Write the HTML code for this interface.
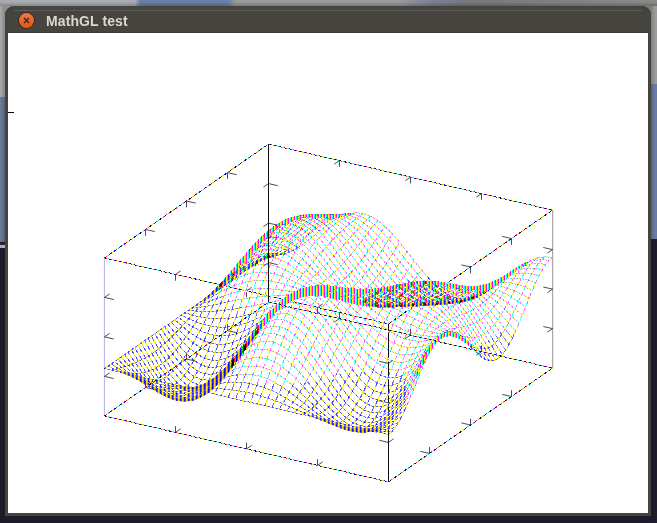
<!DOCTYPE html>
<html><head><meta charset="utf-8"><style>
html,body{margin:0;padding:0;width:657px;height:523px;overflow:hidden;background:#1b1b29;position:relative}
div{position:absolute}
.mesh path{mix-blend-mode:multiply}
.z0p0{stroke:url(#pm0);stroke-opacity:0.8}.z0p1{stroke:url(#pm0);stroke-opacity:0.8}.z0p2{stroke:url(#pm0);stroke-opacity:0.8}.z1p0{stroke:url(#pm0);stroke-opacity:0.72}.z1p1{stroke:url(#pm0);stroke-opacity:0.72}.z1p2{stroke:url(#pm0);stroke-opacity:0.72}.z2p0{stroke:url(#pp0);stroke-opacity:0.7}.z2p1{stroke:url(#pp1);stroke-opacity:0.7}.z2p2{stroke:url(#pp2);stroke-opacity:0.7}.z0p0d{stroke:url(#pm0);stroke-opacity:0.5;stroke-width:2}.z0p1d{stroke:url(#pm0);stroke-opacity:0.5;stroke-width:2}.z0p2d{stroke:url(#pm0);stroke-opacity:0.5;stroke-width:2}.z1p0d{stroke:url(#pm0);stroke-opacity:0.45;stroke-width:2}.z1p1d{stroke:url(#pm0);stroke-opacity:0.45;stroke-width:2}.z1p2d{stroke:url(#pm0);stroke-opacity:0.45;stroke-width:2}.z2p0d{stroke:url(#pp0);stroke-opacity:0.9;stroke-width:2}.z2p1d{stroke:url(#pp0);stroke-opacity:0.9;stroke-width:2}.z2p2d{stroke:url(#pp0);stroke-opacity:0.9;stroke-width:2}
#title{left:46px;top:14px;font:bold 14px "Liberation Sans",sans-serif;color:#dcd8cf;white-space:nowrap;line-height:1;letter-spacing:0.1px}
</style></head><body>
<div style="left:0;top:0;width:657px;height:6px;background:linear-gradient(90deg,#a9acb0 0,#a9acb0 135px,#6a80a8 140px,#6a80a8 228px,#9a9a9a 236px,#9a9a9a 400px,#7a8298 430px,#78787a 470px,#8a8a8a 657px)"></div>
<div style="left:0;top:6px;width:5px;height:91px;background:#a4a6a8"></div>
<div style="left:0;top:97px;width:5px;height:145px;background:#6b7a98"></div>
<div style="left:0;top:243px;width:5px;height:2px;background:#2a2838"></div>
<div style="left:0;top:245px;width:5px;height:3px;background:#b0b0b8"></div>
<div style="left:0;top:248px;width:5px;height:275px;background:#1c1b2a"></div>
<div style="left:651px;top:6px;width:6px;height:78px;background:#9c9c9c"></div>
<div style="left:651px;top:84px;width:6px;height:155px;background:#6a7ca4"></div>
<div style="left:651px;top:239px;width:6px;height:284px;background:#1e1c2a"></div>
<div style="left:0;top:2px;width:657px;height:4px;background:linear-gradient(180deg,rgba(0,0,0,0),rgba(0,0,0,0.22))"></div>
<div style="left:1px;top:6px;width:4px;height:236px;background:linear-gradient(90deg,rgba(0,0,0,0),rgba(0,0,0,0.2))"></div>
<div style="left:651px;top:6px;width:4px;height:233px;background:linear-gradient(270deg,rgba(0,0,0,0),rgba(0,0,0,0.2))"></div>
<div style="left:5px;top:6px;width:12px;height:12px;background:#8f9295"></div>
<div style="left:639px;top:6px;width:12px;height:12px;background:#7c7c7c"></div>
<div style="left:5px;top:6px;width:646px;height:510px;background:#45443f;border-radius:9px 9px 0 0"></div>
<div style="left:5px;top:6px;width:646px;height:26px;background:#46443e;border-radius:9px 9px 0 0"></div>
<div style="left:14px;top:10px;width:628px;height:1px;background:#5d5b55"></div>
<div style="left:8px;top:32px;width:640px;height:1px;background:#3a3935"></div>
<div style="left:19px;top:13px;width:15px;height:15px;border-radius:50%;background:linear-gradient(180deg,#f07a4a 0,#e8621e 60%,#e05a12 100%);box-shadow:0 0 0 1px #3a2a22"></div>
<svg style="position:absolute;left:19px;top:13px" width="15" height="15" viewBox="0 0 15 15"><path d="M5 5L10 10M10 5L5 10" stroke="#3b2418" stroke-width="1.2"/></svg>
<div id="title">MathGL test</div>
<div style="left:8px;top:33px;width:640px;height:480px;background:#fff"></div>
<svg style="position:absolute;left:0;top:0" width="657" height="523" viewBox="0 0 657 523">
<defs>
<pattern id="pm0" patternUnits="userSpaceOnUse" x="0" y="0" width="4" height="4"><rect x="0" y="0" width="1" height="4" fill="#1818ff"/><rect x="1" y="0" width="1" height="4" fill="#ff1010"/><rect x="2" y="0" width="1" height="4" fill="#ffee00"/><rect x="3" y="0" width="1" height="4" fill="#00eeff"/></pattern><pattern id="pp0" patternUnits="userSpaceOnUse" x="0" y="0" width="3" height="4"><rect x="0" y="0" width="1" height="4" fill="#ff30ff"/><rect x="1" y="0" width="1" height="4" fill="#ffff20"/><rect x="2" y="0" width="1" height="4" fill="#20ffff"/></pattern><pattern id="pp1" patternUnits="userSpaceOnUse" x="0" y="0" width="3" height="4"><rect x="0" y="0" width="1" height="4" fill="#ffff20"/><rect x="1" y="0" width="1" height="4" fill="#20ffff"/><rect x="2" y="0" width="1" height="4" fill="#ff30ff"/></pattern><pattern id="pp2" patternUnits="userSpaceOnUse" x="0" y="0" width="3" height="4"><rect x="0" y="0" width="1" height="4" fill="#20ffff"/><rect x="1" y="0" width="1" height="4" fill="#ff30ff"/><rect x="2" y="0" width="1" height="4" fill="#ffff20"/></pattern>
<pattern id="pb" patternUnits="userSpaceOnUse" x="0" y="0" width="5" height="5">
<rect x="0" y="0" width="1" height="5" fill="#000"/><rect x="1" y="0" width="1" height="5" fill="#ff2020"/><rect x="2" y="0" width="1" height="5" fill="#e8f020"/><rect x="3" y="0" width="1" height="5" fill="#20e8f0"/><rect x="4" y="0" width="1" height="5" fill="#2020ff"/>
</pattern>
</defs>
<g fill="none" stroke-width="1" shape-rendering="crispEdges" class="mesh"><path class="z0p0" d="M104.5 368.5 111.8 370.2 119.1 371.9 122.7 372.7M135.4 375.7 140.9 377 148.2 378.7 155.5 380.3M157.3 380.8 162.8 382 170 383.7 177.3 385.4 179.1 385.8M182.8 386.7 184.6 387.1M208.3 392.6 213.7 393.9 221 395.6 228.3 397.3 235.6 399 242.9 400.7 250.1 402.3 257.4 404 264.7 405.7 272 407.4 279.3 409.1 286.6 410.8 293.8 412.5 301.1 414.2 308.4 415.9 315.7 417.6M328.4 420.5 330.2 421M332.1 421.4 333.9 421.8M335.7 422.2 337.5 422.7M339.3 423.1 344.8 424.3 352.1 426 355.7 426.9M359.4 427.7 361.2 428.2M377.6 432 381.2 432.8 388.5 434.5"/><path class="z0p0d" d="M122.7 372.7 126.3 373.6 133.6 375.3 135.4 375.7M155.5 380.3 157.3 380.8M179.1 385.8 182.8 386.7M184.6 387.1 191.9 388.8 199.2 390.5 206.4 392.2 208.3 392.6M315.7 417.6 323 419.3 328.4 420.5M330.2 421 332.1 421.4M333.9 421.8 335.7 422.2M337.5 422.7 339.3 423.1M355.7 426.9 359.4 427.7M361.2 428.2 366.7 429.4 373.9 431.1 377.6 432"/><path class="z0p1" d="M107.8 366.2 115.1 369.3 120.6 371.6M147.9 381.3 149.7 381.8M151.5 382.3 158.8 384 166.1 385.4 173.4 386.4 180.7 387.1M204.3 388.2 206.2 388.2M289.9 406.8 297.2 409.9 304.5 413 311.7 416.1 315.4 417.5M319 419 320.8 419.6M339.1 425.5 340.9 426M377.3 431.1 384.6 431.4 391.8 431.6"/><path class="z0p1d" d="M120.6 371.6 122.4 372.4 129.7 375.3 137 377.9 144.3 380.3 147.9 381.3M149.7 381.8 151.5 382.3M180.7 387.1 187.9 387.6 195.2 387.9 202.5 388.1 204.3 388.2M206.2 388.2 209.8 388.3M315.4 417.5 319 419M320.8 419.6 326.3 421.6 333.6 423.9 339.1 425.5M340.9 426 348.2 427.6 355.4 428.9 362.7 429.9 370 430.6 377.3 431.1"/><path class="z1p1d" d="M209.8 388.3 213.4 388.5"/><path class="z1p1" d="M213.4 388.5 217.1 388.7 224.4 389.1 231.6 389.8 238.9 390.8 246.2 392.2 253.5 393.9 260.8 395.9 268.1 398.2 275.3 400.9 282.6 403.8 289.9 406.8"/><path class="z0p2" d="M111.2 363.9 118.5 368.4 122.1 370.6M149.4 384.1 154.9 385.9 162.2 387.6 169.5 388.5 176.7 388.9 182.2 388.7M298.7 405.7 300.5 406.8 307.8 411.3 315.1 415.6M336.9 426.1 338.8 426.7M378.8 430.2 380.6 430 387.9 428.8 393.4 427.9"/><path class="z0p2d" d="M122.1 370.6 125.8 372.8 133 376.9 140.3 380.5 147.6 383.5 149.4 384.1M182.2 388.7 184 388.6 191.3 387.9 198.6 386.8 205.9 385.6 209.5 385M315.1 415.6 322.4 419.6 329.7 423.1 336.9 426.1M338.8 426.7 344.2 428.4 351.5 430 358.8 430.9 366.1 431.1 373.3 430.8 378.8 430.2"/><path class="z1p2d" d="M209.5 385 213.1 384.4 218.6 383.6"/><path class="z1p2" d="M218.6 383.6 220.4 383.3 227.7 382.6 235 382.3 242.3 382.6 249.6 383.5 256.8 385.2 264.1 387.5 271.4 390.4 278.7 394 286 398 293.2 402.3 298.7 405.7M393.4 427.9 395.2 427.5"/><path class="z0p0" d="M114.5 361.5 121.8 367.5 129.1 373.2M140 380.6 141.8 381.8M161.9 390 165.5 390.9 172.8 391.5 180.1 391.1 187.4 389.9M305.7 404.7 311.2 409 318.4 414.5 325.7 419.5M336.6 425.6 338.5 426.5M353 431 354.8 431.3M382.2 428.3 384 427.8 391.3 425.2 393.1 424.5"/><path class="z0p0d" d="M129.1 373.2 136.4 378.4 140 380.6M141.8 381.8 143.7 382.9 151 386.5 158.2 389.2 161.9 390M187.4 389.9 194.6 388 201.9 385.6 209.2 382.9 211 382.3M325.7 419.5 333 423.9 336.6 425.6M338.5 426.5 340.3 427.4 347.6 429.9 353 431M354.8 431.3 362.1 431.8 369.4 431.3 376.7 429.9 382.2 428.3"/><path class="z1p0d" d="M211 382.3 216.5 380.3 223.8 377.9 225.6 377.4"/><path class="z1p0" d="M225.6 377.4 231.1 375.9 238.3 374.7M276.6 383.6 282 386.8 289.3 391.9 296.6 397.4 303.9 403.2 305.7 404.7M393.1 424.5 398.5 422.4"/><path class="z2p0" d="M238.3 374.7 245.6 374.2 252.9 374.8 260.2 376.3 267.5 378.9 274.7 382.5 276.6 383.6"/><path class="z0p1" d="M117.9 359.2 125.2 366.5 132.5 373.4M134.3 374.9 136.1 376.5M163.4 392.6 168.9 393.8 174.3 394M176.1 394.1 183.4 393.1 190.7 390.9 192.5 390.2M310.9 402.6 314.5 406.1 321.8 412.7 329.1 418.7 334.5 422.5M338.2 424.7 340 425.7M381.9 427.1 387.3 424.6 392.8 421.6"/><path class="z0p1d" d="M132.5 373.4 134.3 374.9M136.1 376.5 139.7 379.7 147 385 154.3 389.3 161.6 392.2 163.4 392.6M174.3 394 176.1 394.1M192.5 390.2 198 387.9 205.3 384.2 212.6 380.2M334.5 422.5 336.3 423.7 338.2 424.7M340 425.7 343.6 427.7 350.9 430.4 358.2 431.7 365.5 431.7 372.8 430.3 380 427.9 381.9 427.1"/><path class="z1p1d" d="M212.6 380.2 219.8 376.1 227.1 372.4 230.8 370.9"/><path class="z1p1" d="M230.8 370.9 232.6 370.1M290.8 384 292.7 385.5 299.9 392.2 307.2 399.1 310.9 402.6M392.8 421.6 394.6 420.6 401.9 416.3"/><path class="z2p1" d="M232.6 370.1 234.4 369.3 241.7 367.1 249 366 256.2 366.1 263.5 367.5 270.8 370.3 278.1 374.4 285.4 379.5 290.8 384"/><path class="z0p2" d="M121.2 356.9 128.5 365.4 135.8 373.4 141.3 378.9M155.8 390.4 157.6 391.6M175.9 396.4 179.5 396.3 186.8 394.7 192.2 392.4M316 400.6 317.9 402.6 325.1 410.2 332.4 417 337.9 421.3M339.7 422.7 343.3 424.9M381.6 425.8 383.4 425 390.7 420.4 392.5 419.1"/><path class="z0p2d" d="M141.3 378.9 143.1 380.7 150.4 386.8 155.8 390.4M157.6 391.6 164.9 394.8 172.2 396.4 175.9 396.4M192.2 392.4 194.1 391.7 201.3 387.5 208.6 382.6 215.9 377.3M337.9 421.3 339.7 422.7M343.3 424.9 347 427.1 354.3 429.8 361.5 431 368.8 430.5 376.1 428.4 381.6 425.8"/><path class="z1p2d" d="M215.9 377.3 223.2 371.9 230.5 367"/><path class="z2p2d" d="M230.5 367 234.1 364.8"/><path class="z2p2" d="M234.1 364.8 237.7 362.7 245 359.6 252.3 357.8 259.6 357.5 266.9 358.8 274.2 361.8 281.4 366.2 288.7 372.1 296 379 299.6 382.8"/><path class="z1p2" d="M299.6 382.8 303.3 386.6 310.6 394.6 316 400.6M392.5 419.1 398 415.1 405.2 409.4"/><path class="z0p0" d="M124.6 354.6 131.9 364.1 139.1 373.2 144.6 379.3M148.2 383.1 150.1 384.8M184.7 397.5 186.5 396.9M190.1 395.8 197.4 392M321.2 398.6 328.5 407 335.8 414.6 343 420.8 350.3 425.5 354 426.9M366.7 429 372.2 428.2 379.5 425.4 386.7 421.1 394 415.4"/><path class="z0p0d" d="M144.6 379.3 146.4 381.4 148.2 383.1M150.1 384.8 153.7 388.3 161 393.5 168.3 397 175.6 398.5 182.8 398.1 184.7 397.5M186.5 396.9 190.1 395.8M197.4 392 204.7 386.8 212 380.8 219.2 374.3M354 426.9 357.6 428.3 364.9 429.2 366.7 429"/><path class="z1p0d" d="M219.2 374.3 226.5 367.7 232 363.1"/><path class="z2p0d" d="M232 363.1 233.8 361.6 241.1 356.3"/><path class="z2p0" d="M241.1 356.3 248.4 352.3 255.7 349.8 262.9 349.1 270.2 350.3 277.5 353.4 284.8 358.2 292.1 364.6 299.4 372.2 306.6 380.7M406.8 403.5 408.6 401.8"/><path class="z1p0" d="M306.6 380.7 313.9 389.7 321.2 398.6M394 415.4 401.3 408.8 406.8 403.5"/><path class="z0p1" d="M127.9 352.2 135.2 362.8 142.5 372.8 149.8 381.7M151.6 383.6 155.2 387.3M169.8 397.6 171.6 398.5M189.8 397.8 191.6 397.2M195.3 395.3 198.9 393M204.4 388.9 206.2 387.3M326.4 396.3 331.8 403.2 339.1 411.3 346.4 418 353.7 422.9 361 425.8 368.2 426.5 375.5 425.1 382.8 421.6 390.1 416.3 393.7 413"/><path class="z0p1d" d="M149.8 381.7 151.6 383.6M155.2 387.3 157.1 389.2 164.3 394.9 169.8 397.6M171.6 398.5 178.9 400 186.2 399.2 189.8 397.8M191.6 397.2 193.5 396.5 195.3 395.3M198.9 393 200.7 391.9 204.4 388.9M206.2 387.3 208 385.8 215.3 378.7 220.8 373"/><path class="z1p1d" d="M220.8 373 222.6 371.1 229.9 363.4 231.7 361.7"/><path class="z2p1d" d="M231.7 361.7 237.2 356.3 244.4 350 246.3 348.8"/><path class="z2p1" d="M246.3 348.8 251.7 345.2 259 342.1 266.3 341.1 273.6 342.1 280.9 345.2 288.1 350.3 295.4 357.1 302.7 365.4 310 374.6 313.6 379.5M404.6 401.9 411.9 393.7"/><path class="z1p1" d="M313.6 379.5 317.3 384.3 324.5 394 326.4 396.3M393.7 413 397.4 409.6 404.6 401.9"/><path class="z0p2" d="M131.3 349.9 138.6 361.3 145.8 372 153.1 381.7 158.6 387.7M162.2 391.2 164 392.7M198.6 395.2 202.3 392.6M205.9 389.6 207.7 387.9M331.5 393.9 335.2 398.7 342.5 407.4 349.7 414.4 357 419.4 364.3 422.3 371.6 422.8 378.9 420.9 386.1 416.9 393.4 410.9 395.2 409"/><path class="z0p2d" d="M158.6 387.7 160.4 389.7 162.2 391.2M164 392.7 167.7 395.7 175 399.4 182.2 400.8 189.5 399.8 196.8 396.5 198.6 395.2M202.3 392.6 204.1 391.3 205.9 389.6M207.7 387.9 211.4 384.4 218.7 376.5 224.1 370"/><path class="z1p2d" d="M224.1 370 225.9 367.9 233.2 359.2 235 357.2"/><path class="z2p2d" d="M235 357.2 240.5 351.1 247.8 344 253.2 339.9"/><path class="z2p2" d="M253.2 339.9 255.1 338.5 262.4 334.8 269.6 333.4 276.9 334.2 284.2 337.3 291.5 342.6 298.8 349.8 306 358.6 313.3 368.4 320.6 378.7M406.2 396.8 408 394.6 415.3 385.3"/><path class="z1p2" d="M320.6 378.7 327.9 389 331.5 393.9M395.2 409 400.7 403.3 406.2 396.8"/><path class="z0p0" d="M134.6 347.6 141.9 359.6 149.2 371 156.5 381.1M158.3 383.2 161.9 387.4M163.8 389.5 169.2 394.2M338.5 393.7 345.8 402.7 353.1 409.9 360.4 415.1 367.6 417.9 374.9 418.2 382.2 416 389.5 411.4 395 406.5"/><path class="z0p0d" d="M156.5 381.1 158.3 383.2M161.9 387.4 163.8 389.5M169.2 394.2 171 395.8 178.3 399.7 185.6 401 192.9 399.7 200.2 396 207.4 390.2 214.7 382.7 222 373.9 227.5 366.8"/><path class="z1p0d" d="M227.5 366.8 229.3 364.5 236.6 355"/><path class="z2p0d" d="M236.6 355 243.9 346.1 251.1 338.3 258.4 332.1 260.2 331.1"/><path class="z2p0" d="M260.2 331.1 265.7 328 273 326.1 280.3 326.8 287.5 329.8 294.8 335.3 302.1 342.7 309.4 351.8 316.7 362 324 372.8 325.8 375.5M405.9 394.1 411.3 387 418.6 377"/><path class="z1p0" d="M325.8 375.5 331.2 383.6 338.5 393.7M395 406.5 396.8 404.8 404.1 396.5 405.9 394.1"/><path class="z0p1" d="M138 345.3 145.3 357.8 152.5 369.6 159.8 380.1 167.1 388.8M168.9 390.4 174.4 395.3M176.2 396.2 178 397.2M194.4 399.2 196.2 398.9M345.5 392.7 349.1 397.3 356.4 404.7 363.7 409.9 371 412.7 378.3 412.8 385.6 410.4 392.8 405.4 394.7 403.6"/><path class="z0p1d" d="M167.1 388.8 168.9 390.4M174.4 395.3 176.2 396.2M178 397.2 181.7 399.2 188.9 400.4 194.4 399.2M196.2 398.9 203.5 394.8 210.8 388.6 218.1 380.5 225.4 371.1 229 366"/><path class="z1p1d" d="M229 366 232.6 361 238.1 353.4"/><path class="z2p1d" d="M238.1 353.4 239.9 350.9 247.2 341.3 254.5 332.9 261.8 326.2 265.4 323.9"/><path class="z2p1" d="M265.4 323.9 269 321.6 276.3 319.4 283.6 319.8 290.9 322.8 298.2 328.3 305.5 335.8 312.7 345.1 320 355.6 327.3 366.7 332.8 375M405.6 391.7 407.4 389.5 414.7 379.4 422 368.8"/><path class="z1p1" d="M332.8 375 334.6 377.7 341.9 388.1 345.5 392.7M394.7 403.6 400.1 398.3 405.6 391.7"/><path class="z0p2" d="M141.3 343 148.6 355.8 155.9 367.9 163.2 378.6 170.4 387.5 177.7 394M179.5 395 185 397.9M352.5 391.4 359.8 398.8 367.1 404.1 374.3 406.8 381.6 406.8 388.9 404.1 394.4 400.2"/><path class="z0p2d" d="M177.7 394 179.5 395M185 397.9 192.3 399 199.6 397.3 206.9 393 214.1 386.4 221.4 377.9 228.7 368 232.3 362.7"/><path class="z1p2d" d="M232.3 362.7 236 357.4 241.4 349.4"/><path class="z2p2d" d="M241.4 349.4 243.3 346.8 250.5 336.7 257.8 327.8 265.1 320.7 272.4 315.8 274.2 315.1M418 372 419.9 369.2"/><path class="z2p2" d="M274.2 315.1 279.7 313.3 287 313.5 294.2 316.4 301.5 321.7 308.8 329.3 316.1 338.6 323.4 349.2 330.6 360.4 337.9 371.6 339.8 374.2M405.3 389.2 410.8 382.4 418 372M419.9 369.2 425.3 361"/><path class="z1p2" d="M339.8 374.2 345.2 382.1 352.5 391.4M394.4 400.2 396.2 398.9 403.5 391.5 405.3 389.2"/><path class="z0p0" d="M144.7 340.6 151.9 353.6 159.2 365.8 166.5 376.6 173.8 385.5 179.3 390.4M182.9 393 186.5 394.9M190.2 396.1 192 396.3M359.5 388.7 363.1 392.4 370.4 397.5 377.7 400.2 385 400.1 392.3 397.4"/><path class="z0p0d" d="M179.3 390.4 181.1 392 182.9 393M186.5 394.9 188.4 395.8 190.2 396.1M192 396.3 195.6 396.8 202.9 395 210.2 390.5 217.5 383.6 224.8 374.8 232 364.6 235.7 359.2"/><path class="z1p0d" d="M235.7 359.2 239.3 353.7 243 348.2"/><path class="z2p0d" d="M243 348.2 246.6 342.7 253.9 332.3 261.2 323.2 268.5 315.7 275.7 310.5 281.2 308.5M417.7 370.1 419.6 367.5M421.4 364.9 428.7 353.8"/><path class="z2p0" d="M281.2 308.5 283 307.8 290.3 307.8 297.6 310.5 304.9 315.7 312.2 323.1 319.4 332.4 326.7 342.9 334 354 341.3 365.2 344.9 370.5M405 386.5 406.8 384.6 414.1 375.3 417.7 370.1M419.6 367.5 421.4 364.9"/><path class="z1p0" d="M344.9 370.5 348.6 375.7 355.8 384.9 359.5 388.7M392.3 397.4 399.5 392.1 405 386.5"/><path class="z0p1" d="M148 338.3 155.3 351.2 162.6 363.4 169.9 374.1 177.1 382.9 180.8 386.1M188.1 391.1 191.7 393 199 393.9 202.6 392.9M370.1 387.9 373.8 390.5 381 393.1 388.3 393"/><path class="z0p1d" d="M180.8 386.1 184.4 389.3 188.1 391.1M202.6 392.9 206.3 391.9 213.5 387.3 220.8 380.2 228.1 371.3 235.4 361 237.2 358.2"/><path class="z1p1d" d="M237.2 358.2 242.7 350 246.3 344.4"/><path class="z2p1d" d="M246.3 344.4 250 338.8 257.2 328.2 264.5 318.9 271.8 311.3 279.1 305.8 286.4 302.9 288.2 302.9M419.3 366 424.7 358.2 432 347.4"/><path class="z2p1" d="M288.2 302.9 293.7 302.7 300.9 305.2 308.2 310.2 315.5 317.4 322.8 326.4 330.1 336.7 337.3 347.7 344.6 358.6 351.9 369M404.7 383.2 410.2 377.7 417.4 368.5 419.3 366"/><path class="z1p1" d="M351.9 369 359.2 378.1 366.5 385.4 370.1 387.9M388.3 393 395.6 390.3 402.9 385.1 404.7 383.2"/><path class="z0p2" d="M151.4 336 158.6 348.7 165.9 360.5 173.2 371 180.5 379.6 187.8 385.8M204.2 389.6 207.8 388.5"/><path class="z0p2d" d="M187.8 385.8 195 389.3 202.3 390.1 204.2 389.6M207.8 388.5 209.6 388 216.9 383.3 224.2 376.3 231.5 367.4 238.7 357.1 240.6 354.4"/><path class="z1p2d" d="M240.6 354.4 246 346.1 247.8 343.3"/><path class="z2p2d" d="M247.8 343.3 253.3 335 260.6 324.4 267.9 315 275.2 307.3 282.4 301.8 289.7 298.8 297 298.3M422.6 359.7 428.1 352.3 435.4 341.9"/><path class="z2p2" d="M297 298.3 304.3 300.5 311.6 305.2 318.8 312.1 326.1 320.8 333.4 330.7 340.7 341.4 348 352 355.3 362 360.7 368.7M404.4 379.2 406.2 378 413.5 370.9 420.8 362.2 422.6 359.7"/><path class="z1p2" d="M360.7 368.7 362.5 370.9 369.8 378 377.1 383 384.4 385.6 391.7 385.6 398.9 383 404.4 379.2"/><path class="z0p0" d="M154.7 333.7 162 345.9 169.3 357.4 176.6 367.5 183.8 375.7 191.1 381.6 198.4 384.9 200.2 385.1"/><path class="z0p0d" d="M200.2 385.1 205.7 385.5 213 383.4 220.2 378.8 227.5 371.8 234.8 363.1 242.1 353"/><path class="z1p0d" d="M242.1 353 249.4 342.1 251.2 339.4"/><path class="z2p0d" d="M251.2 339.4 256.7 331.2 263.9 320.8 271.2 311.6 278.5 304 285.8 298.4 293.1 295.3 300.3 294.6 305.8 296.1M422.3 358.3 424.1 356.3 426 354M427.8 351.7 431.4 347.1 438.7 337.5"/><path class="z2p0" d="M305.8 296.1 307.6 296.6 314.9 300.9 322.2 307.4 329.5 315.6 336.8 325 344 335.1 351.3 345.3 358.6 355 365.9 363.5 371.3 368.6M402.3 375.6 409.6 371 416.9 364.4 422.3 358.3M426 354 427.8 351.7"/><path class="z1p0" d="M371.3 368.6 373.2 370.4 380.4 375.2 387.7 377.8 395 377.9 402.3 375.6"/><path class="z0p1" d="M158.1 331.3 165.3 343 172.6 353.9 179.9 363.4 187.2 371.1 194.5 376.7 201.7 379.7 209 380.2 210.8 379.7"/><path class="z0p1d" d="M210.8 379.7 216.3 378.1 223.6 373.5 230.9 366.8 238.2 358.3 243.6 351"/><path class="z1p1d" d="M243.6 351 245.4 348.6 252.7 338.1"/><path class="z2p1d" d="M252.7 338.1 260 327.6 267.3 317.5 274.6 308.5 281.8 301.1 289.1 295.6 296.4 292.4 303.7 291.6 311 293.3 316.4 296.2M427.5 351.1 434.8 342.8 442.1 334.2"/><path class="z2p1" d="M316.4 296.2 318.3 297.2 325.5 303.2 332.8 310.8 340.1 319.6 347.4 329.1 354.7 338.7 361.9 347.8 369.2 355.9 376.5 362.5 383.8 367.2 389.3 369.2M391.1 369.8 398.4 370.2 405.6 368.2 412.9 364.2 420.2 358.4 427.5 351.1"/><path class="z1p1" d="M389.3 369.2 391.1 369.8"/><path class="z0p2" d="M161.4 329 168.7 339.9 176 350 183.2 358.9 190.5 366 197.8 371.1 205.1 373.9 212.4 374.2 219.7 372.1"/><path class="z0p2d" d="M219.7 372.1 226.9 367.7 234.2 361.3 241.5 353.2 247 346.3"/><path class="z1p2d" d="M247 346.3 248.8 343.9 256.1 334"/><path class="z2p2d" d="M256.1 334 263.3 324 270.6 314.5 277.9 305.9 285.2 298.8 292.5 293.5 299.8 290.3 307 289.3 314.3 290.6 321.6 294.1 325.2 296.8M429 348.1 430.8 346.5 438.1 339.5 445.4 332.1"/><path class="z2p2" d="M325.2 296.8 328.9 299.5 336.2 306.5 343.4 314.6 350.7 323.3 358 332.2 365.3 340.7 372.6 348.3 379.9 354.6 387.1 359.2 394.4 361.8 401.7 362.5 409 361 416.3 357.7 423.6 352.8 429 348.1"/><path class="z0p0" d="M164.7 326.7 172 336.7 179.3 345.9 186.6 353.9 193.9 360.4 201.2 364.9 208.4 367.3 215.7 367.5 223 365.4 230.3 361.2"/><path class="z0p0d" d="M230.3 361.2 237.6 355.2 244.8 347.7 248.5 343.4"/><path class="z1p0d" d="M248.5 343.4 252.1 339.1 257.6 332.2"/><path class="z2p0d" d="M257.6 332.2 259.4 329.9 266.7 320.6 274 311.7 281.3 303.6 288.5 296.9 295.8 291.9 303.1 288.8 310.4 287.7 317.7 288.7 325 291.7 332.2 296.4 335.9 299.5M430.5 345.2 434.2 342.7 441.5 337 448.7 331.1"/><path class="z2p0" d="M335.9 299.5 339.5 302.6 346.8 309.9 354.1 317.9 361.4 326 368.6 333.7 375.9 340.8 383.2 346.7 390.5 351.1 397.8 353.9 405.1 354.9 412.3 354.1 419.6 351.6 426.9 347.7 430.5 345.2"/><path class="z0p1" d="M168.1 324.4 175.4 333.3 182.7 341.5 189.9 348.6 197.2 354.2 204.5 358.2 211.8 360.2 219.1 360.2 226.3 358.2 233.6 354.3 237.3 351.5"/><path class="z0p1d" d="M237.3 351.5 240.9 348.8 248.2 341.9"/><path class="z1p1d" d="M248.2 341.9 255.5 334.1 259.1 329.9"/><path class="z2p1d" d="M259.1 329.9 262.8 325.7 270 317.2 277.3 309.1 284.6 301.7 291.9 295.6 299.2 290.9 306.5 287.9 313.7 286.7 321 287.4 328.3 289.8 335.6 293.9 342.9 299.3 346.5 302.5M433.9 341.5 437.5 339.7 444.8 335.6 450.3 332.3"/><path class="z2p1" d="M346.5 302.5 350.1 305.7 357.4 312.7 364.7 319.9 372 327 379.3 333.4 386.6 338.9 393.8 343.2 401.1 346.2 408.4 347.6 415.7 347.5 423 346 430.2 343.3 433.9 341.5M450.3 332.3 452.1 331.2"/><path class="z0p2" d="M171.4 322.1 178.7 329.8 186 336.8 193.3 342.9 200.6 347.7 207.8 350.9 215.1 352.5 222.4 352.3 229.7 350.4 237 346.9 244.3 342 247.9 338.9"/><path class="z1p2d" d="M247.9 338.9 251.5 335.8 258.8 328.9 260.6 327"/><path class="z2p2d" d="M260.6 327 266.1 321.4 273.4 313.9 280.7 306.7 288 300.1 295.2 294.6 302.5 290.3 309.8 287.5 317.1 286.3 324.4 286.6 331.6 288.6 333.5 289.4M337.1 291.1 338.9 291.9 344.4 295.3M346.2 296.5 353.5 301.9 357.1 304.9M435.4 339 440.9 337.5 448.2 335 453.6 333"/><path class="z2p2" d="M333.5 289.4 337.1 291.1M344.4 295.3 346.2 296.5M357.1 304.9 360.8 308 368.1 314.3 375.3 320.5 382.6 326.3 389.9 331.4 397.2 335.6 404.5 338.7 411.7 340.6 419 341.3 426.3 340.9 433.6 339.5 435.4 339M453.6 333 455.4 332.4"/><path class="z0p0" d="M174.8 319.7 182.1 326.2 189.3 332 196.6 336.9 203.9 340.8 211.2 343.3 218.5 344.4 225.8 344 233 342.3 240.3 339.1 247.6 334.8"/><path class="z1p0" d="M247.6 334.8 254.9 329.5"/><path class="z1p0d" d="M254.9 329.5 262.2 323.5"/><path class="z2p0d" d="M262.2 323.5 269.5 317.2 276.7 310.7 284 304.5 291.3 298.8 298.6 294 305.9 290.2 313.1 287.6 320.4 286.4 327.7 286.5 335 287.9 342.3 290.5 349.6 294.1 351.4 295.3M353.2 296.4 356.8 298.6 364.1 303.7 367.8 306.3M438.8 336.3 444.2 335.9 451.5 335.2 458.8 334.4"/><path class="z2p0" d="M351.4 295.3 353.2 296.4M367.8 306.3 371.4 309 378.7 314.4 386 319.5 393.2 324.2 400.5 328.3 407.8 331.6 415.1 334 422.4 335.5 429.7 336.3 436.9 336.4 438.8 336.3"/><path class="z0p1" d="M178.1 317.4 185.4 322.5 192.7 327 200 330.7 207.3 333.5 214.5 335.3 221.8 335.9 229.1 335.4 236.4 333.7 243.7 331"/><path class="z1p1" d="M243.7 331 251 327.4 258.2 323 261.9 320.5"/><path class="z2p1" d="M261.9 320.5 263.7 319.3M380.2 307.6 382 308.7 389.3 313.2 396.6 317.5 403.9 321.4 411.2 324.9 418.4 327.9 425.7 330.3 433 332.3 440.3 333.8 442.1 334.1"/><path class="z2p1d" d="M263.7 319.3 265.5 318.1 272.8 312.8 280.1 307.6 287.4 302.5 294.6 297.8 301.9 293.7 309.2 290.5 316.5 288.2 323.8 287 331.1 286.8 338.3 287.7 345.6 289.6 352.9 292.3 360.2 295.8 367.5 299.8 374.7 304.2 380.2 307.6M442.1 334.1 447.6 335.1 454.9 336.1 462.1 337.2"/><path class="z0p2" d="M181.5 315.1 188.8 318.7 196 321.9 203.3 324.4 210.6 326.1 217.9 327.1 225.2 327.2 232.5 326.5 234.3 326.1"/><path class="z1p2" d="M234.3 326.1 239.7 325 247 322.7 254.3 319.8 259.8 317.2"/><path class="z2p2" d="M259.8 317.2 261.6 316.3 268.9 312.5M365.4 294.2 370.8 296.5M381.7 301.7 383.6 302.6M394.5 308.3 399.9 311.2 407.2 315 414.5 318.7 421.8 322.3 429.1 325.6 436.4 328.8 443.6 331.8 445.5 332.6"/><path class="z2p2d" d="M268.9 312.5 276.1 308.5 283.4 304.5 290.7 300.5 298 296.9 305.3 293.7 312.6 291.1 319.8 289.2 327.1 288 334.4 287.6 341.7 288 349 289.2 356.2 291 363.5 293.5 365.4 294.2M370.8 296.5 378.1 299.8 381.7 301.7M383.6 302.6 385.4 303.5 392.7 307.3 394.5 308.3M445.5 332.6 450.9 334.7 458.2 337.6 465.5 340.5"/><path class="z0p0" d="M184.8 312.8 192.1 315 199.4 316.7 206.7 317.9 214 318.6 217.6 318.6"/><path class="z1p0" d="M217.6 318.6 221.2 318.7 228.5 318.3 235.8 317.4 243.1 316 250.4 314.2 254 313.1"/><path class="z2p0" d="M254 313.1 257.6 312 264.9 309.6 272.2 306.9 275.9 305.6M332.3 289.3 335.9 289M368.7 292.2 374.2 293.6M376 294.2 379.6 295.4M381.4 296 385.1 297.4M388.7 298.8 392.4 300.4M406.9 307.3 410.6 309.2 417.9 313.1 425.1 317.2 432.4 321.5 439.7 325.8 447 330.3 448.8 331.5M461.5 339.5 463.4 340.6"/><path class="z2p0d" d="M275.9 305.6 279.5 304.2 286.8 301.4 294.1 298.7 301.3 296.2 308.6 293.9 315.9 292 323.2 290.5 330.5 289.4 332.3 289.3M335.9 289 337.7 288.8 345 288.7 352.3 289.2 359.6 290.2 366.9 291.7 368.7 292.2M374.2 293.6 376 294.2M379.6 295.4 381.4 296M385.1 297.4 388.7 298.8M392.4 300.4 396 302 403.3 305.4 406.9 307.3M448.8 331.5 454.3 334.9 461.5 339.5M463.4 340.6 468.8 344.1"/><path class="z0p1" d="M188.2 310.4 195.5 311.2 199.1 311.3"/><path class="z1p1" d="M199.1 311.3 202.7 311.5 210 311.4 217.3 310.9 224.6 310.2 231.9 309.3 239.1 308.2 242.8 307.6"/><path class="z2p1" d="M242.8 307.6 246.4 307 253.7 305.6 261 304.2 268.3 302.8 275.6 301.3 281 300.2M328.4 291.7 330.2 291.5M335.6 290.9 337.5 290.7M379.3 291.7 383 292.4M384.8 292.8 390.3 294.2M392.1 294.7 399.4 297.2M401.2 298 406.6 300.3M408.5 301.2 412.1 303M419.4 307 421.2 308.1 428.5 312.7 435.8 317.8 443 323.4 450.3 329.2 454 332.3"/><path class="z2p1d" d="M281 300.2 282.8 299.8 290.1 298.4 297.4 296.9 304.7 295.6 312 294.3 319.3 293.1 326.5 292 328.4 291.7M330.2 291.5 333.8 291 335.6 290.9M337.5 290.7 341.1 290.3 348.4 289.8 355.7 289.6 362.9 289.8 370.2 290.3 377.5 291.3 379.3 291.7M383 292.4 384.8 292.8M390.3 294.2 392.1 294.7M399.4 297.2 401.2 298M406.6 300.3 408.5 301.2M412.1 303 413.9 303.9 419.4 307M454 332.3 457.6 335.3 464.9 341.6 472.2 347.9"/><path class="z0p2" d="M191.5 308.1 197 307.6"/><path class="z1p2" d="M197 307.6 198.8 307.4 206.1 306.3 213.4 304.9 220.6 303.4 227.9 301.8 229.8 301.5"/><path class="z2p2" d="M229.8 301.5 235.2 300.4 242.5 299.1 249.8 298 257.1 297.1 264.3 296.4 271.6 296 278.9 295.7 286.2 295.5M324.4 294.1 326.2 293.9M331.7 293.4 333.5 293.2M346.3 291.8 349.9 291.4M391.8 290.6 393.6 290.9M397.2 291.7 402.7 293.1M404.5 293.8 410 295.8M413.6 297.5 417.3 299.3 419.1 300.3M428.2 306.2 431.8 308.8 439.1 314.7 446.4 321.3 453.7 328.4 461 335.9M462.8 337.9 464.6 339.8M470.1 345.7 475.5 351.5"/><path class="z2p2d" d="M286.2 295.5 293.5 295.3 300.8 295.2 308 295 315.3 294.7 322.6 294.2 324.4 294.1M326.2 293.9 329.9 293.6 331.7 293.4M333.5 293.2 337.2 292.9 344.4 292.1 346.3 291.8M349.9 291.4 351.7 291.2 359 290.4 366.3 289.8 373.6 289.5 380.9 289.5 388.1 290.1 391.8 290.6M393.6 290.9 395.4 291.2 397.2 291.7M402.7 293.1 404.5 293.8M410 295.8 413.6 297.5M419.1 300.3 424.5 303.6 428.2 306.2M461 335.9 462.8 337.9M464.6 339.8 468.2 343.7 470.1 345.7"/><path class="z0p0" d="M194.9 305.8 198.5 304.7"/><path class="z1p0" d="M198.5 304.7 202.1 303.6 209.4 301.1 216.7 298.5 222.2 296.5"/><path class="z2p0" d="M222.2 296.5 224 295.9 231.3 293.5 238.6 291.6 245.8 290.1 253.1 289.1 260.4 288.6 267.7 288.7 275 289.2 282.3 290.1 289.5 291.2 293.2 291.7M344.1 294.4 346 294.2M358.7 292.2 360.5 291.8M407.9 290.2 411.5 291.3M413.3 291.9 415.1 292.7M417 293.6 420.6 295.3 424.3 297.5M435.2 305.3 442.5 312 449.7 319.5 457 327.8 464.3 336.6 467.9 341.1M473.4 348 478.9 354.8"/><path class="z2p0d" d="M293.2 291.7 296.8 292.3 304.1 293.4 311.4 294.4 318.7 295.1 325.9 295.4 333.2 295.3 340.5 294.8 344.1 294.4M346 294.2 347.8 294 355.1 292.8 358.7 292.2M360.5 291.8 362.4 291.5 369.6 290.2 376.9 289 384.2 288.2 391.5 287.9 398.8 288.3 406 289.6 407.9 290.2M411.5 291.3 413.3 291.9M415.1 292.7 417 293.6M424.3 297.5 427.9 299.7 435.2 305.3M467.9 341.1 471.6 345.7 473.4 348"/><path class="z0p1" d="M198.2 303.5 200 302.6"/><path class="z1p1" d="M200 302.6 205.5 299.9 212.8 296.1 220.1 292.2M478.6 352.5 482.2 357.6"/><path class="z2p1" d="M220.1 292.2 227.3 288.6 234.6 285.5 241.9 283 249.2 281.3 256.5 280.4 263.8 280.4 271 281.1 278.3 282.6 285.6 284.5 292.9 286.8 300.2 289.3M340.2 296.9 343.9 296.8M347.5 296.4 349.3 296.2M351.1 296 356.6 294.9M367.5 292.4 369.3 291.9M402.1 286 405.8 286.4M411.2 287.2 413 287.7M420.3 290.3 422.1 291.1M424 291.9 427.6 294.2M429.4 295.3 431.2 296.5 436.7 300.9M440.3 304.2 445.8 309.6 453.1 318 460.4 327.2 467.7 337.1 474.9 347.4 478.6 352.5"/><path class="z2p1d" d="M300.2 289.3 307.4 291.6 314.7 293.7 322 295.4 329.3 296.5 336.6 297 340.2 296.9M343.9 296.8 347.5 296.4M349.3 296.2 351.1 296M356.6 294.9 358.4 294.6 365.7 292.9 367.5 292.4M369.3 291.9 373 290.9 380.3 289 387.5 287.4 394.8 286.3 402.1 286M405.8 286.4 409.4 286.8 411.2 287.2M413 287.7 416.7 288.7 420.3 290.3M422.1 291.1 424 291.9M427.6 294.2 429.4 295.3M436.7 300.9 438.5 302.4 440.3 304.2"/><path class="z0p2" d="M201.6 301.1 203.4 299.9"/><path class="z1p2d" d="M203.4 299.9 208.8 296.3 216.1 291.2 217.9 290"/><path class="z2p2d" d="M217.9 290 219.8 288.7M221.6 287.5 223.4 286.2M228.9 282.8 230.7 281.6M305.3 287.1 310.8 289.8 318.1 293 325.4 295.6 332.6 297.5 339.9 298.6 347.2 298.7 350.8 298.3M352.7 298.2 354.5 298 358.1 297.2M359.9 296.8 361.8 296.5 363.6 295.9M374.5 292.5 376.3 291.9 383.6 289.4 390.9 287.1 398.2 285.3 400 285.1M401.8 284.8 405.5 284.4 412.7 284.6 414.6 285M420 286.1 421.8 286.9M436.4 295.3 438.2 296.9M440 298.4 441.9 300 447.3 305.7"/><path class="z2p2" d="M219.8 288.7 221.6 287.5M223.4 286.2 228.9 282.8M230.7 281.6 238 277.7 245.3 274.7 252.5 272.8 259.8 272 267.1 272.3 274.4 273.8 281.7 276.1 288.9 279.1 296.2 282.6 303.5 286.2 305.3 287.1M350.8 298.3 352.7 298.2M358.1 297.2 359.9 296.8M363.6 295.9 369 294.4 374.5 292.5M400 285.1 401.8 284.8M414.6 285 420 286.1M421.8 286.9 427.3 289.1 434.6 293.8 436.4 295.3M438.2 296.9 440 298.4M447.3 305.7 449.2 307.6 456.4 316.6 463.7 326.7 471 337.5 478.3 348.6"/><path class="z1p2" d="M478.3 348.6 485.6 359.6"/><path class="z0p0d" d="M204.9 298.8 206.7 297.3"/><path class="z1p0d" d="M206.7 297.3 212.2 292.8 219.5 286.6"/><path class="z2p0d" d="M219.5 286.6 226.8 280.5 230.4 277.7M232.2 276.3 234 274.9 237.7 272.6M239.5 271.5 241.3 270.3 245 268.6M246.8 267.7 248.6 266.8 255.9 264.7M310.5 285.5 314.1 287.8 321.4 292.1 328.7 295.7 336 298.4 343.3 300 350.5 300.5 354.2 300.2M356 300.1 357.8 299.9 359.7 299.5M363.3 298.7 365.1 298.3 366.9 297.8M370.6 296.6 372.4 296 376 294.6M383.3 291.6 387 290.1 394.2 287.2 401.5 284.8 408.8 283.3 416.1 283 423.4 284.2 425.2 284.9M427 285.6 430.7 287 434.3 289.3M436.1 290.4 437.9 291.6 445.2 297.9 447 299.9M448.9 301.9 450.7 303.9"/><path class="z2p0" d="M230.4 277.7 232.2 276.3M237.7 272.6 239.5 271.5M245 268.6 246.8 267.7M255.9 264.7 263.2 264 270.4 264.7 277.7 266.7 285 269.8 292.3 273.8 299.6 278.3 306.9 283.1 310.5 285.5M354.2 300.2 356 300.1M359.7 299.5 363.3 298.7M366.9 297.8 370.6 296.6M376 294.6 379.7 293.1 383.3 291.6M425.2 284.9 427 285.6M434.3 289.3 436.1 290.4M447 299.9 448.9 301.9M450.7 303.9 452.5 305.9 459.8 315.4 467.1 326 474.3 337.4 479.8 346.2"/><path class="z1p0" d="M479.8 346.2 481.6 349.1 488.9 360.8"/><path class="z0p1d" d="M208.3 296.5 210.1 294.7"/><path class="z1p1" d="M210.1 294.7 211.9 293M481.3 342.9 485 348.9 492.3 360.9"/><path class="z1p1d" d="M211.9 293 215.5 289.4 221 283.9"/><path class="z2p1d" d="M221 283.9 222.8 282.1 230.1 275 237.4 268.7 239.2 267.3M244.7 263.4 246.5 262.4M257.4 257.7 259.2 257.1M264.7 256.6 266.5 256.4 273.8 257.4M317.5 285.7 324.8 291 332 295.5 339.3 298.9 346.6 301.2 353.9 302.1 361.2 301.7 368.5 300.2 370.3 299.6M379.4 296.1 381.2 295.3M388.5 291.9 390.3 291M393.9 289.4 397.6 287.7 404.9 284.8 412.2 282.8 419.4 282 426.7 282.8 434 285.4 435.8 286.5M439.5 288.8 441.3 289.9 443.1 291.5M446.7 294.7 448.6 296.2 455.8 304.4"/><path class="z2p1" d="M239.2 267.3 244.7 263.4M246.5 262.4 251.9 259.4 257.4 257.7M259.2 257.1 264.7 256.6M273.8 257.4 281.1 259.9 288.4 263.7 295.6 268.6 302.9 274.1 310.2 280 317.5 285.7M370.3 299.6 375.7 297.7 379.4 296.1M381.2 295.3 383 294.5 388.5 291.9M390.3 291 393.9 289.4M435.8 286.5 439.5 288.8M443.1 291.5 446.7 294.7M455.8 304.4 463.1 314.1 470.4 325 477.7 336.8 481.3 342.9"/><path class="z0p2d" d="M211.6 294.2 213.4 292.2"/><path class="z1p2d" d="M213.4 292.2 218.9 286.2 222.5 282.1"/><path class="z2p2d" d="M222.5 282.1 226.2 277.9 228 276M229.8 274 233.4 270 240.7 262.9 248 257 251.7 254.8M282.6 252.8 284.4 253.5M322.7 285 328.1 289.7 329.9 291M333.6 293.7 335.4 295 342.7 299.2 350 302.1 357.2 303.4 364.5 303.3 366.3 303M370 302.3 371.8 301.9M377.3 300 379.1 299.4M384.6 296.9 386.4 296M390 294.1 393.7 292.3 395.5 291.3M399.1 289.4 400.9 288.5 402.8 287.7M406.4 286 408.2 285.2 415.5 282.8 422.8 281.6 430.1 282.1 437.3 284.4 441 286.5M442.8 287.6 444.6 288.6 446.4 290.2M455.6 298.9 459.2 303"/><path class="z2p2" d="M228 276 229.8 274M251.7 254.8 255.3 252.6 262.6 250 269.9 249.4 277.1 250.6 282.6 252.8M284.4 253.5 291.7 257.9 299 263.6 306.3 270 313.6 276.7 320.8 283.4 322.7 285M329.9 291 333.6 293.7M366.3 303 370 302.3M371.8 301.9 377.3 300M379.1 299.4 384.6 296.9M386.4 296 390 294.1M395.5 291.3 399.1 289.4M402.8 287.7 406.4 286M441 286.5 442.8 287.6M446.4 290.2 451.9 294.9 455.6 298.9M459.2 303 466.5 312.7 473.8 323.8 481 335.7 484.7 341.8"/><path class="z1p2" d="M484.7 341.8 488.3 347.9 493.8 356.9"/><path class="z0p2" d="M493.8 356.9 495.6 359.9"/><path class="z0p0d" d="M214.9 291.9 216.8 289.7"/><path class="z1p0d" d="M216.8 289.7 222.2 283.1 225.9 278.6"/><path class="z2p0d" d="M225.9 278.6 229.5 274.1 236.8 265.4 244.1 257.6 251.4 251.1 258.6 246.4 260.5 245.7M262.3 245 264.1 244.3M327.8 284.5 331.5 288.1 338.7 294.2 340.6 295.4M342.4 296.7 346 299.1 353.3 302.6 360.6 304.4 367.9 304.7 375.2 303.5 382.4 301M386.1 299.3 389.7 297.6 391.5 296.6M402.5 290.6 404.3 289.6 411.6 286 413.4 285.3M417 283.9 418.8 283.2 426.1 281.7 433.4 281.8 440.7 283.8 442.5 284.7M453.4 292.2 455.3 293.7 457.1 295.7M460.7 299.7 462.5 301.6"/><path class="z2p0" d="M260.5 245.7 262.3 245M264.1 244.3 265.9 243.6 273.2 242.9 280.5 244.2 287.8 247.5 295.1 252.5 302.3 258.7 309.6 265.9 316.9 273.5 324.2 281 327.8 284.5M340.6 295.4 342.4 296.7M382.4 301 386.1 299.3M391.5 296.6 397 293.7 402.5 290.6M413.4 285.3 417 283.9M442.5 284.7 448 287.7 453.4 292.2M457.1 295.7 460.7 299.7M462.5 301.6 469.8 311.2 477.1 322.1 484.4 333.9 488 339.9"/><path class="z1p0" d="M488 339.9 491.7 346 497.1 354.8"/><path class="z0p0" d="M497.1 354.8 498.9 357.8"/><path class="z0p1d" d="M218.3 289.5 220.1 287.2"/><path class="z1p1d" d="M220.1 287.2 225.6 280.1 229.2 275.3"/><path class="z2p1d" d="M229.2 275.3 232.9 270.5 240.1 261.2 247.4 252.9 254.7 245.9 262 240.8 265.6 239.3M267.4 238.6 269.3 237.8M276.6 237.1 278.4 237.4M334.8 286.2 342.1 293 349.4 298.6 356.7 302.7 363.9 305 371.2 305.7 378.5 304.8 380.3 304.2M382.1 303.6 385.8 302.5 387.6 301.7M391.2 300 393.1 299.2M400.3 295.2 405.8 292.1M413.1 288.1 414.9 287.2 416.7 286.4M420.4 284.9 422.2 284.1 429.5 282.3 436.8 282 444 283.6 451.3 287.1 453.1 288.5M460.4 294.6 462.2 296.5M464.1 298.4 465.9 300.3"/><path class="z2p1" d="M265.6 239.3 267.4 238.6M269.3 237.8 276.6 237.1M278.4 237.4 283.8 238.5 291.1 242 298.4 247.3 305.7 254.1 313 261.9 320.2 270.1 327.5 278.4 334.8 286.2M380.3 304.2 382.1 303.6M387.6 301.7 391.2 300M393.1 299.2 400.3 295.2M405.8 292.1 407.6 291 413.1 288.1M416.7 286.4 420.4 284.9M453.1 288.5 458.6 292.8 460.4 294.6M462.2 296.5 464.1 298.4M465.9 300.3 473.2 309.5 480.4 320 487.7 331.4 491.4 337.2"/><path class="z1p1" d="M491.4 337.2 495 343.1 502.3 354.5"/><path class="z0p2d" d="M221.6 287.2 223.5 284.8"/><path class="z1p2d" d="M223.5 284.8 228.9 277.4 230.7 274.8"/><path class="z2p2d" d="M230.7 274.8 236.2 267.3 243.5 257.5 249 250.9M250.8 248.7 258.1 241.4 265.3 236 267.2 235.2M341.8 287.7 345.4 291.5 352.7 297.7 360 302.3 367.3 305.2 374.6 306.4 381.8 305.8 389.1 303.8 391 303M394.6 301.5 396.4 300.7 398.2 299.7M411 292.6 414.6 290.6M416.4 289.6 418.3 288.6 420.1 287.8M421.9 287 425.5 285.3M429.2 284.3 432.8 283.2 440.1 282.6 447.4 283.7 454.7 286.8 456.5 288.1M458.3 289.4 462 291.9 463.8 293.6M467.4 297.1 469.2 298.9 471.1 301"/><path class="z2p2" d="M249 250.9 250.8 248.7M267.2 235.2 272.6 232.8 279.9 231.9 287.2 233.4 294.5 237 301.7 242.6 309 249.7 316.3 257.9 323.6 266.7 330.9 275.6 338.2 284 341.8 287.7M391 303 394.6 301.5M398.2 299.7 403.7 296.8 411 292.6M414.6 290.6 416.4 289.6M420.1 287.8 421.9 287M425.5 285.3 429.2 284.3M456.5 288.1 458.3 289.4M463.8 293.6 467.4 297.1M471.1 301 476.5 307.5 483.8 317.4 491.1 328.2 494.7 333.7"/><path class="z1p2" d="M494.7 333.7 498.4 339.3 505.6 350.1"/><path class="z0p0d" d="M225 284.9 226.8 282.4"/><path class="z1p0d" d="M226.8 282.4 232.3 274.8 234.1 272.2M363.3 301.5 365.2 302.4M367 303.3 370.6 305 377.9 306.6 385.2 306.5"/><path class="z2p0d" d="M234.1 272.2 239.6 264.4 246.8 254.3 254.1 245.2 261.4 237.6 268.7 231.9 276 228.5 277.8 228.2M347 287.5 348.8 289.5 354.2 294.6M356.1 296.3 359.7 298.9M385.2 306.5 392.5 304.9 394.3 304.2M397.9 302.8 399.8 302.1M405.2 299.3 407 298.3 410.7 296.3M414.3 294.3 416.1 293.3M419.8 291.3 421.6 290.3M428.9 286.8 436.2 284.4 443.5 283.4 450.7 284.1 458 286.7 461.7 288.9M463.5 290 465.3 291.1 467.1 292.7M470.8 295.8 472.6 297.4 474.4 299.3"/><path class="z2p0" d="M277.8 228.2 283.2 227.5 290.5 228.8 297.8 232.5 305.1 238.2 312.4 245.5 319.7 254 326.9 263.2 334.2 272.6 341.5 281.5 347 287.5M354.2 294.6 356.1 296.3M359.7 298.9 363.3 301.5M394.3 304.2 397.9 302.8M399.8 302.1 405.2 299.3M410.7 296.3 414.3 294.3M416.1 293.3 419.8 291.3M421.6 290.3 428.9 286.8M461.7 288.9 463.5 290M467.1 292.7 470.8 295.8M474.4 299.3 479.9 305.2 487.1 314.3 494.4 324.3 499.9 332"/><path class="z1p0" d="M365.2 302.4 367 303.3M499.9 332 501.7 334.6 509 344.6"/><path class="z0p1d" d="M228.3 282.6 230.2 280"/><path class="z1p1d" d="M230.2 280 235.6 272.4 237.4 269.8M364.9 298.8 366.7 300.2 374 304.2 381.3 306.4 388.5 306.9 395.8 305.7"/><path class="z2p1d" d="M237.4 269.8 239.3 267.1M241.1 264.5 242.9 261.9 250.2 251.6 257.5 242.3 262.9 236.4M264.7 234.5 272 228.6 279.3 224.9 283 224.3M284.8 224 286.6 223.7 288.4 224M352.1 287.2 359.4 294.5 364.9 298.8M395.8 305.7 403.1 303.3 406.7 301.6M408.6 300.7 410.4 299.9M417.7 296 419.5 295M426.8 291.2 428.6 290.3M430.4 289.4 432.2 288.6 434.1 287.9M439.5 285.9 441.3 285.6M445 284.9 446.8 284.6 454.1 284.7 461.4 286.6 466.8 289.4M468.6 290.3 470.5 291.7M474.1 294.4 475.9 295.7 477.7 297.4"/><path class="z2p1" d="M239.3 267.1 241.1 264.5M262.9 236.4 264.7 234.5M283 224.3 284.8 224M288.4 224 293.9 225 301.2 228.5 308.4 234.2 315.7 241.6 323 250.3 330.3 259.7 337.6 269.3 344.8 278.6 352.1 287.2M406.7 301.6 408.6 300.7M410.4 299.9 417.7 296M419.5 295 425 292.1 426.8 291.2M428.6 290.3 430.4 289.4M434.1 287.9 439.5 285.9M441.3 285.6 445 284.9M466.8 289.4 468.6 290.3M470.5 291.7 474.1 294.4M477.7 297.4 483.2 302.6 490.5 310.8 497.8 319.8 505.1 329.1 506.9 331.4"/><path class="z1p1" d="M506.9 331.4 512.3 338.2"/><path class="z0p2d" d="M231.7 280.2 233.5 277.7"/><path class="z1p2" d="M233.5 277.7 235.3 275.2M237.1 272.7 239 270.2 240.8 267.6M366.4 295.2 368.2 296.8M370 298.4 375.5 301.8"/><path class="z1p2d" d="M235.3 275.2 237.1 272.7M368.2 296.8 370 298.4M375.5 301.8 377.3 303 384.6 305.8 391.9 306.8 399.2 306.2 404.6 304.8"/><path class="z2p2" d="M240.8 267.6 244.4 262.3M291.8 220.9 297.2 221.7 304.5 225.1 311.8 230.6 319.1 237.9 326.4 246.6 333.6 256.1 340.9 265.9 348.2 275.5 355.5 284.4 359.1 288.2M364.6 293.7 366.4 295.2M406.5 304.3 413.7 301.3 415.6 300.4M417.4 299.5 421 297.7M422.8 296.7 426.5 294.9M430.1 293 433.8 291.3M437.4 289.7 442.9 287.6M444.7 287.2 446.5 286.7M472 289.5 475.6 291.7M481.1 295.4 486.6 299.8 493.8 306.8 501.1 314.7 508.4 322.9 515.7 331"/><path class="z2p2d" d="M244.4 262.3 246.2 259.7 253.5 249.4 260.8 240 268.1 232.1 275.4 226 282.7 222.1 289.9 220.7 291.8 220.9M359.1 288.2 362.8 292.1 364.6 293.7M404.6 304.8 406.5 304.3M415.6 300.4 417.4 299.5M421 297.7 422.8 296.7M426.5 294.9 428.3 293.9 430.1 293M433.8 291.3 435.6 290.4 437.4 289.7M442.9 287.6 444.7 287.2M446.5 286.7 450.1 285.9 457.4 285.5 464.7 286.7 472 289.5M475.6 291.7 479.3 293.9 481.1 295.4"/><path class="z0p0" d="M235 277.9 236.9 275.5"/><path class="z1p0" d="M236.9 275.5 238.7 273M242.3 268.2 244.1 265.6M375.2 297.3 377 298.6"/><path class="z1p0d" d="M238.7 273 242.3 268.2M371.6 294.4 373.4 296.1 375.2 297.3M377 298.6 380.7 301.2 388 304.6 395.2 306.3 402.5 306.4 409.8 305 413.4 303.8"/><path class="z2p0" d="M244.1 265.6 246 263M247.8 260.5 249.6 257.9M251.4 255.3 256.9 247.8M258.7 245.4 260.5 243.1M286 220.1 287.8 219.7M302.4 219.9 307.9 222.2 315.1 227.4 322.4 234.5 329.7 243 337 252.4 344.3 262.3 351.5 272 358.8 281.2 364.3 287.3M420.7 300.9 424.4 299.3M426.2 298.4 431.6 295.8M433.5 294.9 437.1 293.2M438.9 292.3 444.4 290.1M446.2 289.3 451.7 287.8M484.4 293.1 489.9 296.6 497.2 302.4 504.5 309.1 511.7 316.1 519 323.2"/><path class="z2p0d" d="M246 263 247.8 260.5M249.6 257.9 251.4 255.3M256.9 247.8 258.7 245.4M260.5 243.1 264.2 238.4 271.4 230.4 278.7 224.2 286 220.1M287.8 219.7 293.3 218.4 300.6 219.1 302.4 219.9M364.3 287.3 366.1 289.3 371.6 294.4M413.4 303.8 417.1 302.5 420.7 300.9M424.4 299.3 426.2 298.4M431.6 295.8 433.5 294.9M437.1 293.2 438.9 292.3M444.4 290.1 446.2 289.3M451.7 287.8 453.5 287.2 460.8 286.3 468.1 286.7 475.3 288.6 482.6 291.9 484.4 293.1"/><path class="z0p1" d="M238.4 275.6 240.2 273.3"/><path class="z1p1d" d="M240.2 273.3 245.7 266.3M374.9 291.4 376.7 293.2 378.6 294.7M380.4 296.1 384 298.9M389.5 302 391.3 303 393.1 303.6M394.9 304.2 398.6 305.4 405.9 306.2 413.1 305.5 420.4 303.6 422.2 302.9"/><path class="z1p1" d="M245.7 266.3 249.3 261.4M378.6 294.7 380.4 296.1M384 298.9 389.5 302M393.1 303.6 394.9 304.2"/><path class="z2p1" d="M249.3 261.4 252.9 256.4 260.2 246.6 267.5 237.4M269.3 235.4 273 231.4M276.6 227.8 278.4 226.2M296.6 216.8 298.5 216.9M300.3 217 303.9 217.1 311.2 219.8 318.5 224.7 325.8 231.3 333 239.5 340.3 248.7 347.6 258.5 354.9 268.2 362.2 277.5 369.5 286 373.1 289.6M422.2 302.9 425.9 301.5M429.5 300 435 297.5M438.6 295.8 440.5 295M442.3 294.2 449.6 291.1 455 289.2M456.8 288.6 458.7 288.2M487.8 290.7 493.2 293.3 500.5 297.8 507.8 303.1 515.1 309 522.4 315"/><path class="z2p1d" d="M267.5 237.4 269.3 235.4M273 231.4 274.8 229.4 276.6 227.8M278.4 226.2 282.1 223.1 289.4 218.8 296.6 216.8M298.5 216.9 300.3 217M373.1 289.6 374.9 291.4M425.9 301.5 427.7 300.8 429.5 300M435 297.5 438.6 295.8M440.5 295 442.3 294.2M455 289.2 456.8 288.6M458.7 288.2 464.1 287.1 471.4 286.7 478.7 287.6 486 289.8 487.8 290.7"/><path class="z0p2" d="M241.7 273.3 243.5 271.1"/><path class="z1p2" d="M243.5 271.1 247.2 266.8M249 264.6 252.6 260M381.9 291.5 383.7 293M385.5 294.6 387.4 296.2"/><path class="z1p2d" d="M247.2 266.8 249 264.6M380.1 289.9 381.9 291.5M383.7 293 385.5 294.6M387.4 296.2 394.6 300.9 401.9 304 409.2 305.5 416.5 305.6 423.8 304.3 431.1 302.1 432.9 301.3"/><path class="z2p2" d="M252.6 260 256.3 255.3 263.6 245.8M265.4 243.6 270.9 236.9 278.1 229 283.6 224.2M296.3 217 298.2 216.4M300 215.8 303.6 215.8M314.5 217.9 321.8 222.2 329.1 228.4 336.4 236.1 343.7 245 351 254.5 358.2 264.2 365.5 273.6 372.8 282.3 378.3 288M432.9 301.3 438.3 299.1 443.8 296.7M445.6 295.9 452.9 292.7M454.7 292 460.2 289.9 463.8 288.9M491.1 288.1 496.6 289.7 503.9 292.9 511.2 297 518.4 301.6 525.7 306.7"/><path class="z2p2d" d="M263.6 245.8 265.4 243.6M283.6 224.2 285.4 222.7 292.7 218.2 296.3 217M298.2 216.4 300 215.8M303.6 215.8 307.3 215.8 314.5 217.9M378.3 288 380.1 289.9M443.8 296.7 445.6 295.9M452.9 292.7 454.7 292M463.8 288.9 467.5 287.8 474.8 286.6 482 286.5 489.3 287.5 491.1 288.1"/><path class="z0p0" d="M245.1 271 246.9 269"/><path class="z1p0d" d="M246.9 269 252.4 263.1M385.3 287.8 390.7 292.9 394.4 295.6M396.2 297 398 298.3 399.8 299.3M403.5 301.2 405.3 302.2M410.7 303.9 412.6 304.5 419.8 305.3 427.1 304.7 434.4 303.1 441.7 300.5"/><path class="z1p0" d="M252.4 263.1 256 258.8M394.4 295.6 396.2 297M399.8 299.3 403.5 301.2M405.3 302.2 410.7 303.9"/><path class="z2p0" d="M256 258.8 259.6 254.4 266.9 245.6 274.2 237 279.7 231.2M283.3 227.7 286.9 224.5M288.8 222.9 292.4 220.6M301.5 216.2 303.3 215.5M319.7 217.5 325.2 220.2 332.5 225.8 339.7 232.9 347 241.2 354.3 250.4 361.6 259.9 368.9 269.3 376.1 278.2 383.4 286.1 385.3 287.8M443.5 299.8 445.3 299M450.8 296.7 454.4 295.1M456.3 294.3 461.7 291.9M465.4 290.5 467.2 289.8M494.5 285.4 499.9 286 507.2 287.9 514.5 290.7 521.8 294.3 529.1 298.3"/><path class="z2p0d" d="M279.7 231.2 281.5 229.3 283.3 227.7M286.9 224.5 288.8 222.9M292.4 220.6 296 218.2 301.5 216.2M303.3 215.5 310.6 214.9 317.9 216.5 319.7 217.5M441.7 300.5 443.5 299.8M445.3 299 449 297.5 450.8 296.7M454.4 295.1 456.3 294.3M461.7 291.9 463.5 291.2 465.4 290.5M467.2 289.8 470.8 288.5 478.1 286.5 485.4 285.3 492.7 285.2 494.5 285.4"/><path class="z0p1d" d="M248.4 268.6 250.2 266.9"/><path class="z1p1d" d="M250.2 266.9 255.7 261.7M390.4 285.6 394.1 289.3 401.3 295.3 403.2 296.5M406.8 298.8 408.6 299.9 410.4 300.7M414.1 302.2 415.9 303 423.2 304.6 430.5 304.8 437.8 303.7 445 301.7"/><path class="z1p1" d="M255.7 261.7 261.2 255.9M403.2 296.5 406.8 298.8M410.4 300.7 414.1 302.2M445 301.7 450.5 299.5"/><path class="z2p1" d="M261.2 255.9 263 253.9 270.3 245.7 275.7 239.6M277.5 237.6 284.8 230.1 292.1 223.7 297.6 220.1M301.2 218.1 303 217.3M315.8 214.9 317.6 215.1M324.9 217 326.7 217.8M328.5 218.5 335.8 223.3 343.1 229.7 350.4 237.5 357.6 246.2 364.9 255.4 372.2 264.7 379.5 273.7 386.8 282 390.4 285.6M454.1 298 459.6 295.6 465.1 293M499.6 282.5 503.3 282.3 510.6 283 517.9 284.6 525.1 287 532.4 290.2"/><path class="z2p1d" d="M275.7 239.6 277.5 237.6M297.6 220.1 299.4 218.9 301.2 218.1M303 217.3 306.7 215.8 314 214.7 315.8 214.9M317.6 215.1 321.2 215.6 324.9 217M326.7 217.8 328.5 218.5M450.5 299.5 452.3 298.8 454.1 298M465.1 293 466.9 292.2 474.2 288.9 481.4 286.1 488.7 284 496 282.7 499.6 282.5"/><path class="z0p2d" d="M251.8 266.3 253.6 264.9"/><path class="z1p2d" d="M253.6 264.9 259 260.5 260.9 258.8M397.4 285.2 402.9 290.2M412 297.2 413.8 298.2M415.6 299.2 419.3 301.1 422.9 302.3M424.7 302.9 426.5 303.5 433.8 304.5 441.1 304 448.4 302.4 455.7 299.8 457.5 299"/><path class="z1p2" d="M260.9 258.8 266.3 253.6M395.6 283.3 397.4 285.2M402.9 290.2 404.7 291.9 412 297.2M413.8 298.2 415.6 299.2M422.9 302.3 424.7 302.9M457.5 299 459.3 298.2"/><path class="z2p2" d="M266.3 253.6 273.6 246.1 280.9 238.6 286.4 233.2M288.2 231.4 295.5 225.1 302.7 220.1 308.2 217.4M310 216.5 311.8 216.1M322.8 215 324.6 215M333.7 218.1 339.1 221.1 346.4 226.7 353.7 233.8 361 241.9 368.3 250.7 375.6 259.8 382.8 268.9 390.1 277.4 395.6 283.3M459.3 298.2 462.9 296.6 470.2 292.9 475.7 290.1M503 279.5 504.8 279.1M506.6 278.7 513.9 278.2 521.2 278.6 528.5 280.2 535.8 282.6"/><path class="z2p2d" d="M286.4 233.2 288.2 231.4M308.2 217.4 310 216.5M311.8 216.1 317.3 214.8 322.8 215M324.6 215 331.9 217.1 333.7 218.1M475.7 290.1 477.5 289.2 484.8 285.7 492.1 282.6 499.4 280.2 503 279.5M504.8 279.1 506.6 278.7"/><path class="z0p0d" d="M255.1 264 256.9 262.8"/><path class="z1p0d" d="M256.9 262.8 262.4 259.3 269.7 253.5M402.6 282.6 408 288 409.9 289.6M411.7 291.1 415.3 294.1 420.8 297.6M424.4 299.6 429.9 302 437.2 303.7 444.4 303.9 451.7 302.8 459 300.5 464.5 298.1"/><path class="z1p0" d="M269.7 253.5 271.5 251.9M409.9 289.6 411.7 291.1M420.8 297.6 422.6 298.8 424.4 299.6M464.5 298.1 466.3 297.3"/><path class="z2p0" d="M271.5 251.9 277 246.9 284.2 240 291.5 233.2 298.8 226.9 306.1 221.7 313.4 217.8M326.1 215 327.9 214.8 329.8 215.1M337 216.8 342.5 219.1 349.8 223.8 357.1 230.1 364.3 237.5 371.6 245.9 378.9 254.8 386.2 263.8 393.5 272.6 400.8 280.8 402.6 282.6M466.3 297.3 473.6 293.4 477.2 291.3M510 275.2 517.3 273.6 524.5 273.1 531.8 273.8 539.1 275.7"/><path class="z2p0d" d="M313.4 217.8 320.7 215.4 326.1 215M329.8 215.1 335.2 216 337 216.8M477.2 291.3 480.9 289.2 488.1 285 495.4 281.1 502.7 277.8 510 275.2"/><path class="z0p1d" d="M258.5 261.7 260.3 260.8M438.7 301.9 440.5 302.5 442.3 302.7"/><path class="z1p1d" d="M260.3 260.8 265.7 258.3 273 253.6M409.6 281.9 411.4 283.9 418.7 290.6M436.9 301.3 438.7 301.9M442.3 302.7 447.8 303.4 455.1 302.7 462.4 300.7 469.6 297.6 473.3 295.6"/><path class="z1p1" d="M273 253.6 276.7 250.7M407.7 280 409.6 281.9M418.7 290.6 425.9 296.1 433.2 300.1 436.9 301.3"/><path class="z2p1" d="M276.7 250.7 280.3 247.9 287.6 241.7 294.9 235.3 300.3 230.7M302.2 229.1 309.4 223.7 316.7 219.3 322.2 217.1M331.3 214.9 333.1 215M342.2 216.2 345.8 217.3 353.1 221.1 360.4 226.4 367.7 233.2 375 241 382.3 249.6 389.5 258.6 396.8 267.5 404.1 276.1 407.7 280M478.7 292.4 480.6 291.3M515.2 271.3 520.6 269.5 527.9 268.2 535.2 268.2 542.5 269.6"/><path class="z2p1d" d="M300.3 230.7 302.2 229.1M322.2 217.1 324 216.3 331.3 214.9M333.1 215 338.6 215.2 342.2 216.2M473.3 295.6 476.9 293.6 478.7 292.4M480.6 291.3 484.2 289 491.5 284.3 498.8 279.6 506 275.4 513.3 271.9 515.2 271.3"/><path class="z0p2d" d="M261.8 259.3 265.4 258.3M440.2 299.3 443.9 300.8 445.7 301.2M447.5 301.6 451.1 302.3 453 302.3"/><path class="z1p2d" d="M265.4 258.3 269.1 257.3 276.4 253.8M416.5 281.3 422 286.8M425.7 289.9 427.5 291.4M434.8 296.5 436.6 297.7M453 302.3 458.4 302.2 465.7 300.5 473 297.5 478.4 294.4"/><path class="z1p2" d="M276.4 253.8 283.7 249.1M414.7 279.4 416.5 281.3M422 286.8 425.7 289.9M427.5 291.4 429.3 293 434.8 296.5M436.6 297.7 440.2 299.3"/><path class="z2p2" d="M283.7 249.1 290.9 243.6 298.2 237.6 305.5 231.6 312.8 226 320.1 221.2 325.5 218.4M340.1 214.7 341.9 214.5 343.7 214.8M347.4 215.3 349.2 215.6 356.5 218.4 363.8 222.9 371 228.9 378.3 236.1 385.6 244.4 392.9 253.2 400.2 262.2 407.4 271.1 414.7 279.4M522.1 266.6 524 265.8 531.2 263.9 538.5 263.4 545.8 264.5"/><path class="z2p2d" d="M325.5 218.4 327.3 217.5 334.6 215.2 340.1 214.7M343.7 214.8 347.4 215.3M478.4 294.4 480.3 293.4 487.5 288.5 494.8 283.3 502.1 278.1 509.4 273.2 516.7 269 522.1 266.6"/><path class="z0p2" d="M445.7 301.2 447.5 301.6"/><path class="z0p0d" d="M265.2 257 270.6 256.5M443.6 296.8 447.2 298.7 449 299.2M450.8 299.7 454.5 300.8 461.8 301.1"/><path class="z1p0d" d="M270.6 256.5 272.4 256.4 277.9 254.7M423.5 280.7 425.4 282.7 432.6 289.5M434.5 290.8 439.9 294.9M461.8 301.1 469.1 299.7 476.3 296.9 478.2 295.9M480 294.8 483.6 292.8"/><path class="z1p0" d="M277.9 254.7 279.7 254.1 287 250.4 292.5 246.9M419.9 276.7 423.5 280.7M432.6 289.5 434.5 290.8M439.9 294.9 443.6 296.8M478.2 295.9 480 294.8"/><path class="z2p0" d="M292.5 246.9 294.3 245.7 301.6 240.1 308.8 234.3 316.1 228.5 323.4 223.3 330.7 218.9M341.6 214.9 343.4 214.5M350.7 214.1 352.5 214.1 359.8 215.9 367.1 219.4 374.4 224.6 381.7 231.3 388.9 239.1 396.2 247.8 403.5 256.9 410.8 266 418.1 274.7 419.9 276.7M520 266.4 521.8 265.5M527.3 262.7 534.6 260.4 541.9 259.5 549.2 260.4"/><path class="z2p0d" d="M330.7 218.9 338 215.7 341.6 214.9M343.4 214.5 345.3 214.1 350.7 214.1M483.6 292.8 490.9 287.8 498.2 282.3 505.5 276.6 512.7 271.2 520 266.4M521.8 265.5 527.3 262.7"/><path class="z0p0" d="M449 299.2 450.8 299.7"/><path class="z0p1d" d="M268.5 254.7 270.3 254.9M272.1 255.1 275.8 255.5M456 298 457.8 298.7M461.5 299.1 465.1 299.5 466.9 299.2"/><path class="z0p1" d="M270.3 254.9 272.1 255.1M275.8 255.5 277.6 255.2M448.7 295 450.6 296.1 456 298M457.8 298.7 461.5 299.1"/><path class="z1p1" d="M277.6 255.2 283.1 254.5 290.3 251.8 297.6 247.8 299.4 246.6M426.9 276.2 428.7 278.3 430.5 280.1M436 285.7 439.6 288.7M443.3 291.7 448.7 295M477.9 296.5 479.7 295.8 487 291.8 488.8 290.6"/><path class="z2p1" d="M299.4 246.6 304.9 242.8 312.2 237.1 319.5 231.1 326.8 225.4 334 220.4 339.5 217.4M341.3 216.4 343.1 215.7M348.6 213.7 355.9 212.7 363.2 213.5 370.4 216.1 377.7 220.5 385 226.5 392.3 233.9 399.6 242.4 406.9 251.4 414.1 260.8 421.4 269.8 426.9 276.2M488.8 290.6 494.2 286.8 497.9 283.9M501.5 281.1 503.3 279.6M523.4 264.4 530.7 260.4 537.9 257.7 545.2 256.7 552.5 257.5"/><path class="z2p1d" d="M339.5 217.4 341.3 216.4M343.1 215.7 348.6 213.7M497.9 283.9 501.5 281.1M503.3 279.6 508.8 275.1 516.1 269.4 523.4 264.4"/><path class="z1p1d" d="M430.5 280.1 436 285.7M439.6 288.7 443.3 291.7M466.9 299.2 472.4 298.5 477.9 296.5"/><path class="z0p1" d="M104.5 368.5 107.8 366.2 111.2 363.9 114.5 361.5 117.9 359.2 121.2 356.9 124.6 354.6 127.9 352.2 131.3 349.9 134.6 347.6 138 345.3 141.3 343 144.7 340.6 148 338.3 151.4 336 154.7 333.7 158.1 331.3 161.4 329 164.7 326.7 168.1 324.4 171.4 322.1 174.8 319.7 178.1 317.4 181.5 315.1 184.8 312.8 188.2 310.4 191.5 308.1 194.9 305.8 198.2 303.5 201.6 301.1 204.1 299.4M220 288.4 220.8 287.8M224.2 285.5 225 284.9M225.8 284.3 228.3 282.6 229.2 282M234.2 278.5 235 277.9 236.7 276.8M237.5 276.2 238.4 275.6M239.2 275 241.7 273.3 245.1 271 247.6 269.2M250.1 267.5 250.9 266.9M251.8 266.3 252.6 265.7"/><path class="z0p1d" d="M204.1 299.4 204.9 298.8 208.3 296.5 211.6 294.2 214.9 291.9 218.3 289.5 220 288.4M220.8 287.8 221.6 287.2 224.2 285.5M225 284.9 225.8 284.3M229.2 282 231.7 280.2 234.2 278.5M236.7 276.8 237.5 276.2M238.4 275.6 239.2 275M247.6 269.2 248.4 268.6 250.1 267.5M250.9 266.9 251.8 266.3M252.6 265.7 255.1 264 258.5 261.7 261.8 259.3 265.2 257 268.5 254.7"/><path class="z0p2" d="M111.8 370.2 115.1 369.3 118.5 368.4 121.8 367.5 125.2 366.5 128.5 365.4 131.9 364.1 135.2 362.8 138.6 361.3 141.9 359.6 145.3 357.8 148.6 355.8 151.9 353.6 155.3 351.2 158.6 348.7 162 345.9 165.3 343 168.7 339.9 172 336.7 175.4 333.3 178.7 329.8 182.1 326.2 185.4 322.5 188.8 318.7 192.1 315 195.5 311.2 197.1 309.3"/><path class="z1p2" d="M197.1 309.3 198.8 307.4 202.1 303.6 205.5 299.9 206.3 299M238.1 270.7 239 270.2 242.3 268.2M244.8 266.8 245.7 266.3 249 264.6M250.7 263.9 252.4 263.1 254 262.4"/><path class="z1p2d" d="M206.3 299 208.8 296.3 212.2 292.8 215.5 289.4 218.9 286.2 222.2 283.1 225.6 280.1 228.9 277.4 232.3 274.8 235.6 272.4 238.1 270.7M242.3 268.2 244.8 266.8M249 264.6 250.7 263.9M254 262.4 255.7 261.7 259 260.5 262.4 259.3 265.7 258.3 269.1 257.3 272.4 256.4 274.1 255.9"/><path class="z0p2d" d="M274.1 255.9 275.8 255.5"/><path class="z0p0" d="M119.1 371.9 122.4 372.4 123.2 372.5M130.8 373.3 132.5 373.4 135.8 373.4 139.1 373.2 142.5 372.8 145.8 372 149.2 371 152.5 369.6 155.9 367.9 159.2 365.8 162.6 363.4 165.9 360.5 169.3 357.4 172.6 353.9 176 350 179.3 345.9 182.7 341.5 186 336.8 189.3 332 192.7 327 196 321.9 199.4 316.7 201.9 312.8"/><path class="z0p0d" d="M123.2 372.5 125.8 372.8 129.1 373.2 130.8 373.3"/><path class="z1p0" d="M201.9 312.8 202.7 311.5 206.1 306.3 209.4 301.1 212.8 296.1 215.3 292.4M269.7 253.5 273 253.6 276.4 253.8 279.7 254.1 283.1 254.5"/><path class="z1p0d" d="M215.3 292.4 216.1 291.2 219.5 286.6M267.2 253.6 269.7 253.5"/><path class="z2p0d" d="M219.5 286.6 222.8 282.1 226.2 277.9 229.5 274.1M230.3 273.2 232.9 270.5 236.2 267.3 239.6 264.4 242.1 262.5M244.6 260.8 246.2 259.7 248.8 258.3"/><path class="z2p0" d="M229.5 274.1 230.3 273.2M242.1 262.5 242.9 261.9 244.6 260.8M248.8 258.3 249.6 257.9 252.9 256.4 256.3 255.3 259.6 254.4 263 253.9 266.3 253.6 267.2 253.6"/><path class="z0p1d" d="M126.3 373.6 129.7 375.3 133 376.9 136.4 378.4 139.7 379.7 143.1 380.7 146.4 381.4 147.3 381.5M148.9 381.6 149.8 381.7 152.3 381.7M154.8 381.4 156.5 381.1 157.3 380.9"/><path class="z0p1" d="M147.3 381.5 148.9 381.6M152.3 381.7 153.1 381.7 154.8 381.4M157.3 380.9 159.8 380.1 163.2 378.6 166.5 376.6 169.9 374.1 173.2 371 176.6 367.5 179.9 363.4 183.2 358.9 186.6 353.9 189.9 348.6 193.3 342.9 196.6 336.9 200 330.7 203.3 324.4 206.7 317.9 208.3 314.6"/><path class="z1p1" d="M208.3 314.6 210 311.4 213.4 304.9 216.7 298.5 219.2 293.8M282.8 248.8 283.7 249.1 287 250.4 290.3 251.8"/><path class="z2p1" d="M219.2 293.8 220.1 292.2 222.6 287.7M238.5 263.3 239.3 262.2M260.2 246.6 262.7 246M264.4 245.8 266.9 245.6 270.3 245.7 273.6 246.1 277 246.9 280.3 247.9 282.8 248.8"/><path class="z2p1d" d="M222.6 287.7 223.4 286.2 226.8 280.5 230.1 275 233.4 270 236.8 265.4 238.5 263.3M239.3 262.2 240.1 261.2 243.5 257.5 246.8 254.3 250.2 251.6 253.5 249.4 256.9 247.8 260.2 246.6M262.7 246 263.6 245.8 264.4 245.8"/><path class="z0p2d" d="M133.6 375.3 137 377.9 140.3 380.5 143.7 382.9 147 385 150.4 386.8 153.7 388.3 157.1 389.2 160.4 389.7 161.2 389.6M162.9 389.6 163.8 389.5 164.6 389.4M168.8 388.2 170.4 387.5 171.3 387M173 386 173.8 385.5 174.6 384.8"/><path class="z0p2" d="M161.2 389.6 162.9 389.6M164.6 389.4 167.1 388.8 168.8 388.2M171.3 387 173 386M174.6 384.8 177.1 382.9 180.5 379.6 183.8 375.7 187.2 371.1 190.5 366 193.9 360.4 197.2 354.2 200.6 347.7 203.9 340.8 207.3 333.5 210.6 326.1 214 318.6"/><path class="z1p2" d="M214 318.6 217.3 310.9 220.6 303.4 223.2 297.8M296 246.7 297.6 247.8"/><path class="z2p2" d="M223.2 297.8 224 295.9 227.3 288.6 230.7 281.6M232.4 278.3 233.2 276.6M270.9 236.9 274.2 237 275.9 237.3M278.4 237.8 280.9 238.6 283.4 239.6M284.2 240 287.6 241.7 290.1 243.1M290.9 243.6 294.3 245.7 296 246.7"/><path class="z2p2d" d="M230.7 281.6 232.4 278.3M233.2 276.6 234 274.9 237.4 268.7 240.7 262.9 244.1 257.6 247.4 252.9 250.8 248.7 254.1 245.2 257.5 242.3 260.8 240 264.2 238.4 267.5 237.4 270.9 236.9M275.9 237.3 277.5 237.6 278.4 237.8M283.4 239.6 284.2 240M290.1 243.1 290.9 243.6"/><path class="z0p0" d="M140.9 377 141.7 377.8M177.7 394 180.2 392.5M181.9 391.3 183.6 390M187.8 385.8 191.1 381.6 194.5 376.7 197.8 371.1 201.2 364.9 204.5 358.2 207.8 350.9 211.2 343.3 214.5 335.3 217.9 327.1 220.4 320.8"/><path class="z0p0d" d="M141.7 377.8 144.3 380.3 147.6 383.5 151 386.5 154.3 389.3 157.6 391.6 161 393.5 164.3 394.9 167.7 395.7 171 395.8 174.4 395.3 177.7 394M180.2 392.5 181.1 392 181.9 391.3M183.6 390 184.4 389.3 187.8 385.8"/><path class="z1p0" d="M220.4 320.8 221.2 318.7 224.6 310.2 227.9 301.8 228.8 299.8"/><path class="z2p0" d="M228.8 299.8 231.3 293.5 234.6 285.5 238 277.7 239.6 274M243 266.8 244.7 263.4M263.1 236 264.7 234.5M275.6 229.3 278.1 229 281.5 229.3 284.8 230.1 288.2 231.4 291.5 233.2 294.9 235.3 298.2 237.6 301.6 240.1 304.9 242.8"/><path class="z2p0d" d="M239.6 274 241.3 270.3 243 266.8M244.7 263.4 248 257 251.4 251.1 254.7 245.9 258.1 241.4 261.4 237.6 263.1 236M264.7 234.5 268.1 232.1 271.4 230.4 274.8 229.4 275.6 229.3"/><path class="z0p1" d="M148.2 378.7 149 379.6M152.4 383.2 154.9 385.9 157.4 388.4M173.3 399 174.1 399.2M185 397.9 186.7 396.9M190.9 393.7 191.7 393M198.4 384.9 201.7 379.7 205.1 373.9 208.4 367.3 211.8 360.2 215.1 352.5 218.5 344.4 221.8 335.9 225.2 327.2 226.8 322.7"/><path class="z0p1d" d="M149 379.6 151.5 382.3 152.4 383.2M157.4 388.4 158.2 389.2 161.6 392.2 164.9 394.8 168.3 397 171.6 398.5 173.3 399M174.1 399.2 175 399.4 178.3 399.7 181.7 399.2 185 397.9M186.7 396.9 188.4 395.8 190.9 393.7M191.7 393 195 389.3 198.4 384.9"/><path class="z1p1" d="M226.8 322.7 228.5 318.3 231.9 309.3 234.4 302.6"/><path class="z2p1" d="M234.4 302.6 235.2 300.4 238.6 291.6 241.9 283 245.3 274.7 247.8 268.8M250.3 263.1 251.9 259.4 255.3 252.6 257.8 247.9M259.5 245 261.2 242.2M271.2 229.4 272 228.6M275.4 226 276.2 225.5M288.8 222.9 292.1 223.7 295.5 225.1 298.8 226.9 302.2 229.1 305.5 231.6 308.8 234.3 312.2 237.1"/><path class="z2p1d" d="M247.8 268.8 248.6 266.8 250.3 263.1M257.8 247.9 258.6 246.4 259.5 245M261.2 242.2 262 240.8 265.3 236 268.7 231.9 271.2 229.4M272 228.6 275.4 226M276.2 225.5 278.7 224.2 282.1 223.1 285.4 222.7 288.8 222.9"/><path class="z0p2d" d="M155.5 380.3 158 383.1M163 388.4 164.7 390M168.9 393.8 172.2 396.4 175.6 398.5 178.9 400 182.2 400.8 185.6 401 188.9 400.4 192.3 399 195.6 396.8 199 393.9M199.8 392.9 202.3 390.1 205.7 385.5 208.2 381.5"/><path class="z0p2" d="M158 383.1 158.8 384 162.2 387.6 163 388.4M164.7 390 165.5 390.9 168.9 393.8M199 393.9 199.8 392.9M208.2 381.5 209 380.2 212.4 374.2 215.7 367.5 219.1 360.2 222.4 352.3 225.8 344 229.1 335.4 232.5 326.5 233.3 324.2"/><path class="z1p2" d="M233.3 324.2 235.8 317.4 239.1 308.2 240 305.9"/><path class="z2p2" d="M240 305.9 242.5 299.1 245.8 290.1 249.2 281.3 252.5 272.8 255.9 264.7M257.6 260.9 259.2 257.1 262.6 250 265.1 245.2M265.9 243.6 268.4 239.3M270.9 235.3 272.6 232.8 275.1 229.6M276.8 227.6 278.5 225.8M284.3 221.1 285.2 220.6M286 220.1 286.8 219.8M288.5 219.1 289.4 218.8M301.9 219.8 302.7 220.1 306.1 221.7 309.4 223.7 312.8 226 316.1 228.5 319.5 231.1"/><path class="z2p2d" d="M255.9 264.7 257.6 260.9M265.1 245.2 265.9 243.6M268.4 239.3 269.3 237.8 270.9 235.3M275.1 229.6 276 228.5 276.8 227.6M278.5 225.8 279.3 224.9 282.7 222.1 284.3 221.1M285.2 220.6 286 220.1M286.8 219.8 288.5 219.1M289.4 218.8 292.7 218.2 296 218.2 299.4 218.9 301.9 219.8"/><path class="z0p0" d="M162.8 382 166.1 385.4 167.8 386.9M170.3 389.3 172.8 391.5 176.1 394.1M178.7 395.8 179.5 396.3 181.2 397.2M220.5 370.4 223 365.4 226.3 358.2 229.7 350.4 233 342.3 236.4 333.7 238.9 327.1"/><path class="z0p0d" d="M167.8 386.9 169.5 388.5 170.3 389.3M176.1 394.1 178.7 395.8M181.2 397.2 182.8 398.1 186.2 399.2 189.5 399.8 192.9 399.7 196.2 398.9 199.6 397.3 202.9 395 206.3 391.9 209.6 388 213 383.4 216.3 378.1 219.7 372.1 220.5 370.4"/><path class="z1p0" d="M238.9 327.1 239.7 325 243.1 316 245.6 309.2"/><path class="z2p0" d="M245.6 309.2 246.4 307 249.8 298 253.1 289.1 256.5 280.4 259.8 272 263.2 264 264.8 260.2M268.2 252.9 269.9 249.4 273.2 242.9 275.7 238.5M277.4 235.8 279.9 231.9 282.4 228.6M283.2 227.5 286.6 223.7M295.8 217.2 296.6 216.8 298.3 216.3M299.1 216.1 300 215.8 303.3 215.5M310 216.5 311.7 217.2M315 218.5 316.7 219.3 320.1 221.2 323.4 223.3 326.8 225.4"/><path class="z2p0d" d="M264.8 260.2 266.5 256.4 268.2 252.9M275.7 238.5 276.6 237.1 277.4 235.8M282.4 228.6 283.2 227.5M286.6 223.7 289.9 220.7 293.3 218.4 295.8 217.2M298.3 216.3 299.1 216.1M303.3 215.5 306.7 215.8 310 216.5M311.7 217.2 313.4 217.8 315 218.5"/><path class="z0p1" d="M170 383.7 171.7 385M172.5 385.7 173.4 386.4 174.2 387M175.9 388.2 176.7 388.9 180.1 391.1M182.6 392.6 183.4 393.1 186.8 394.7 187.6 395M190.1 395.8 191.8 396.1M230.3 361.2 233.6 354.3 237 346.9 240.3 339.1 243.7 331"/><path class="z0p1d" d="M171.7 385 172.5 385.7M174.2 387 175.9 388.2M180.1 391.1 182.6 392.6M187.6 395 190.1 395.8M191.8 396.1 193.5 396.5 196.8 396.5 200.2 396 203.5 394.8 206.9 393 210.2 390.5 213.5 387.3 216.9 383.3 220.2 378.8 223.6 373.5 226.9 367.7 230.3 361.2"/><path class="z1p1" d="M243.7 331 247 322.7 250.4 314.2 251.2 312.1"/><path class="z2p1" d="M251.2 312.1 253.7 305.6 257.1 297.1 260.4 288.6 263.8 280.4 267.1 272.3 270.4 264.7 273.8 257.4M275.5 254 277.1 250.6 280.5 244.2 283 239.9M283.8 238.5 287.2 233.4M288 232.2 290.5 228.8 293.9 225 297.2 221.7 299.7 219.8M302.2 218.1 303.9 217.1M310.6 214.9 312.3 214.8M315.6 214.7 317.3 214.8 318.1 215M330.7 218.9 334 220.4"/><path class="z2p1d" d="M273.8 257.4 275.5 254M283 239.9 283.8 238.5M287.2 233.4 288 232.2M299.7 219.8 300.6 219.1 302.2 218.1M303.9 217.1 307.3 215.8 310.6 214.9M312.3 214.8 314 214.7 315.6 214.7M318.1 215 320.7 215.4 324 216.3 327.3 217.5 330.7 218.9"/><path class="z0p2" d="M177.3 385.4 179.8 386.7M189 390.4 190.7 390.9M194.9 391.7 197.4 392 198.2 392M243.4 343.7 244.3 342 247.6 334.8"/><path class="z0p2d" d="M179.8 386.7 180.7 387.1 184 388.6 187.4 389.9 189 390.4M190.7 390.9 194.1 391.7 194.9 391.7M198.2 392 200.7 391.9 204.1 391.3 207.4 390.2 210.8 388.6 214.1 386.4 217.5 383.6 220.8 380.2 224.2 376.3 227.5 371.8 230.9 366.8 234.2 361.3 237.6 355.2 240.9 348.8 243.4 343.7"/><path class="z1p2" d="M247.6 334.8 251 327.4 254.3 319.8 256.8 314"/><path class="z2p2" d="M256.8 314 257.6 312 261 304.2 264.3 296.4 267.7 288.7 271 281.1 274.4 273.8 277.7 266.7 281.1 259.9 284.4 253.5 287.8 247.5 291.1 242 294.5 237 297.8 232.5 301.2 228.5 304.5 225.1 307.9 222.2 311.2 219.8 312.9 218.9M324.6 215 327.9 214.8 331.3 214.9 332.1 215"/><path class="z2p2d" d="M312.9 218.9 314.5 217.9 317.9 216.5 321.2 215.6 324.6 215M332.1 215 334.6 215.2 338 215.7 341.3 216.4"/><path class="z0p0d" d="M184.6 387.1 187.9 387.6 191.3 387.9 194.6 388 198 387.9 201.3 387.5 204.7 386.8 208 385.8 211.4 384.4 214.7 382.7 218.1 380.5 221.4 377.9 224.8 374.8 228.1 371.3 231.5 367.4 234.8 363.1 238.2 358.3 241.5 353.2 244.8 347.7 248.2 341.9 249 340.4"/><path class="z1p0d" d="M249 340.4 251.5 335.8 254.9 329.5 256.6 326.3"/><path class="z1p0" d="M256.6 326.3 258.2 323 260.7 318"/><path class="z2p0" d="M260.7 318 261.6 316.3 264.9 309.6 268.3 302.8 271.6 296 275 289.2 278.3 282.6 281.7 276.1 285 269.8 288.4 263.7 291.7 257.9 295.1 252.5 298.4 247.3 301.7 242.6 305.1 238.2 307.6 235.2M308.4 234.2 311.8 230.6 315.1 227.4 318.5 224.7 321.8 222.2 325.2 220.2 327.7 218.9M340.2 214.9 341.9 214.5 342.7 214.4M346.1 214 348.6 213.7"/><path class="z2p0d" d="M307.6 235.2 308.4 234.2M327.7 218.9 328.5 218.5 331.9 217.1 335.2 216 338.6 215.2 340.2 214.9M342.7 214.4 345.3 214.1 346.1 214"/><path class="z0p1d" d="M191.9 388.8 195.2 387.9 198.6 386.8 201.9 385.6 205.3 384.2 208.6 382.6 212 380.8 215.3 378.7 218.7 376.5 222 373.9 225.4 371.1 228.7 368 232 364.6 235.4 361 238.7 357.1 242.1 353 242.9 351.9"/><path class="z1p1d" d="M242.9 351.9 245.4 348.6 248.8 343.9 252.1 339.1 255.5 334.1 258.8 328.9 261.3 324.9"/><path class="z2p1d" d="M261.3 324.9 262.2 323.5 265.5 318.1 268.9 312.5 270.5 309.7"/><path class="z2p1" d="M270.5 309.7 272.2 306.9 275.6 301.3 278.9 295.7 282.3 290.1 285.6 284.5 288.9 279.1 292.3 273.8 295.6 268.6 299 263.6 302.3 258.7 305.7 254.1 309 249.7 312.4 245.5 315.7 241.6 319.1 237.9 322.4 234.5 325.8 231.3 329.1 228.4 332.5 225.8 335.8 223.3 339.1 221.1 342.5 219.1 345.8 217.3 349.2 215.6 352.5 214.1 355.9 212.7"/><path class="z0p2d" d="M199.2 390.5 202.5 388.1 205.9 385.6 209.2 382.9 212.6 380.2 215.9 377.3"/><path class="z1p2d" d="M215.9 377.3 219.2 374.3 222.6 371.1 225.9 367.9 229.3 364.5 232.6 361 236 357.4 239.3 353.7 242.7 350 246 346.1 249.4 342.1 252.7 338.1 253.6 337.1"/><path class="z2p2d" d="M253.6 337.1 256.1 334 259.4 329.9 262.8 325.7 266.1 321.4 269.5 317.2 272.8 312.8 276.1 308.5 279.5 304.2 282.8 299.8 284.5 297.7"/><path class="z2p2" d="M284.5 297.7 286.2 295.5 289.5 291.2 292.9 286.8 296.2 282.6 299.6 278.3 302.9 274.1 306.3 270 309.6 265.9 313 261.9 316.3 257.9 319.7 254 323 250.3 326.4 246.6 329.7 243 333 239.5 336.4 236.1 339.7 232.9 343.1 229.7 346.4 226.7 349.8 223.8 353.1 221.1 356.5 218.4 359.8 215.9 363.2 213.5"/><path class="z0p0d" d="M206.4 392.2 209.8 388.3"/><path class="z1p0d" d="M209.8 388.3 213.1 384.4 216.5 380.3 219.8 376.1 223.2 371.9 226.5 367.7 229.9 363.4 233.2 359.2 235.7 356.1"/><path class="z2p0d" d="M235.7 356.1 236.6 355 239.9 350.9 243.3 346.8 246.6 342.7 250 338.8 253.3 335 256.7 331.2 260 327.6 263.3 324 266.7 320.6 270 317.2 273.4 313.9 276.7 310.7 280.1 307.6 283.4 304.5 286.8 301.4 290.1 298.4 293.5 295.3 296.8 292.3 300.2 289.3 301.8 287.7"/><path class="z2p0" d="M301.8 287.7 303.5 286.2 306.9 283.1 310.2 280 313.6 276.7 316.9 273.5 320.2 270.1 323.6 266.7 326.9 263.2 330.3 259.7 333.6 256.1 337 252.4 340.3 248.7 343.7 245 347 241.2 350.4 237.5 353.7 233.8 357.1 230.1 360.4 226.4 363.8 222.9 367.1 219.4 370.4 216.1"/><path class="z0p1" d="M213.7 393.9 215.4 391.3"/><path class="z1p1" d="M215.4 391.3 217.1 388.7 220.4 383.3 222.1 380.6"/><path class="z1p1d" d="M222.1 380.6 223.8 377.9 227.1 372.4 230.5 367 231.3 365.6"/><path class="z2p1d" d="M231.3 365.6 233.8 361.6 237.2 356.3 240.5 351.1 243.9 346.1 247.2 341.3 250.5 336.7 253.9 332.3 257.2 328.2 260.6 324.4 263.9 320.8 267.3 317.5 270.6 314.5 274 311.7 277.3 309.1 280.7 306.7 284 304.5 287.4 302.5 290.7 300.5 294.1 298.7 297.4 296.9 300.8 295.2 304.1 293.4 307.4 291.6 310.8 289.8 314.1 287.8 317.5 285.7 318.3 285.1"/><path class="z2p1" d="M318.3 285.1 320.8 283.4 324.2 281 327.5 278.4 330.9 275.6 334.2 272.6 337.6 269.3 340.9 265.9 344.3 262.3 347.6 258.5 351 254.5 354.3 250.4 357.6 246.2 361 241.9 364.3 237.5 367.7 233.2 371 228.9 374.4 224.6 377.7 220.5"/><path class="z0p2" d="M221 395.6 222.7 392.4"/><path class="z1p2" d="M222.7 392.4 224.4 389.1 227.7 382.6 231.1 375.9 233.6 371"/><path class="z2p2" d="M233.6 371 234.4 369.3 237.7 362.7 239.4 359.5M334.8 286.2 338.2 284 341.5 281.5 344.8 278.6 348.2 275.5 351.5 272 354.9 268.2 358.2 264.2 361.6 259.9 364.9 255.4 368.3 250.7 371.6 245.9 375 241 378.3 236.1 381.7 231.3 385 226.5"/><path class="z2p2d" d="M239.4 359.5 241.1 356.3 244.4 350 247.8 344 251.1 338.3 254.5 332.9 257.8 327.8 261.2 323.2 264.5 318.9 267.9 315 271.2 311.6 274.6 308.5 277.9 305.9 281.3 303.6 284.6 301.7 288 300.1 291.3 298.8 294.6 297.8 298 296.9 301.3 296.2 304.7 295.6 308 295 311.4 294.4 314.7 293.7 318.1 293 321.4 292.1 324.8 291 328.1 289.7 331.5 288.1 334.8 286.2"/><path class="z0p0" d="M228.3 397.3 229.1 395.4"/><path class="z1p0" d="M229.1 395.4 231.6 389.8 235 382.3 238.3 374.7"/><path class="z2p0" d="M238.3 374.7 241.7 367.1 245 359.6 248.4 352.3 251.7 345.2 255.1 338.5 256.7 335.3M351.3 287.7 352.1 287.2 355.5 284.4 358.8 281.2 362.2 277.5 365.5 273.6 368.9 269.3 372.2 264.7 375.6 259.8 378.9 254.8 382.3 249.6 385.6 244.4 388.9 239.1 392.3 233.9"/><path class="z2p0d" d="M256.7 335.3 258.4 332.1 261.8 326.2 265.1 320.7 268.5 315.7 271.8 311.3 275.2 307.3 278.5 304 281.8 301.1 285.2 298.8 288.5 296.9 291.9 295.6 295.2 294.6 298.6 294 301.9 293.7 305.3 293.7 308.6 293.9 312 294.3 315.3 294.7 318.7 295.1 322 295.4 325.4 295.6 328.7 295.7 332 295.5 335.4 295 338.7 294.2 342.1 293 345.4 291.5 348.8 289.5 351.3 287.7"/><path class="z0p1" d="M235.6 399 236.4 396.9"/><path class="z1p1" d="M236.4 396.9 238.9 390.8 242.3 382.6 244.8 376.3"/><path class="z2p1" d="M244.8 376.3 245.6 374.2 249 366 252.3 357.8 255.7 349.8 259 342.1 262.4 334.8 265.7 328 269 321.6 270.7 318.7M351 298.2 351.9 297.9M366.9 288.5 369.5 286 372.8 282.3 376.1 278.2 379.5 273.7 382.8 268.9 386.2 263.8 389.5 258.6 392.9 253.2 396.2 247.8 399.6 242.4"/><path class="z2p1d" d="M270.7 318.7 272.4 315.8 275.7 310.5 279.1 305.8 282.4 301.8 285.8 298.4 289.1 295.6 292.5 293.5 295.8 291.9 299.2 290.9 302.5 290.3 305.9 290.2 309.2 290.5 312.6 291.1 315.9 292 319.3 293.1 322.6 294.2 325.9 295.4 329.3 296.5 332.6 297.5 336 298.4 339.3 298.9 342.7 299.2 346 299.1 349.4 298.6 351 298.2M351.9 297.9 352.7 297.7 356.1 296.3 359.4 294.5 362.8 292.1 366.1 289.3 366.9 288.5"/><path class="z0p2" d="M242.9 400.7 243.7 398.5"/><path class="z1p2" d="M243.7 398.5 246.2 392.2 249.6 383.5 251.2 379.2M369.2 298.8 370 298.4 371.7 297.2M374.2 295.3 375.1 294.6"/><path class="z2p2" d="M251.2 379.2 252.9 374.8 256.2 366.1 259.6 357.5 262.9 349.1 266.3 341.1 269.6 333.4 273 326.1 276.3 319.4 279.7 313.3 283 307.8 283.9 306.6M382.6 287.1 383.4 286.1 386.8 282 390.1 277.4 393.5 272.6 396.8 267.5 400.2 262.2 403.5 256.9 406.9 251.4"/><path class="z2p2d" d="M283.9 306.6 286.4 302.9 289.7 298.8 293.1 295.3 296.4 292.4 299.8 290.3 303.1 288.8 306.5 287.9 309.8 287.5 313.1 287.6 316.5 288.2 319.8 289.2 323.2 290.5 326.5 292 329.9 293.6 333.2 295.3 336.6 297 339.9 298.6 343.3 300 346.6 301.2 350 302.1 353.3 302.6 356.7 302.7 360 302.3 362.5 301.7M380.9 289 382.6 287.1"/><path class="z1p2d" d="M362.5 301.7 363.3 301.5 366.7 300.2 369.2 298.8M371.7 297.2 373.4 296.1 374.2 295.3M375.1 294.6 376.7 293.2 380.1 289.9 380.9 289"/><path class="z0p0" d="M250.1 402.3 251 400.2"/><path class="z1p0" d="M251 400.2 253.5 393.9 256.8 385.2 258.5 380.8M378.2 302.5 379 302.1M382.3 300.1 384 298.9M387.4 296.2 389.9 293.8M392.4 291.1 394.1 289.3M398.2 284.1 399.1 283"/><path class="z2p0" d="M258.5 380.8 260.2 376.3 263.5 367.5 266.9 358.8 270.2 350.3 273.6 342.1 276.9 334.2 280.3 326.8 283.6 319.8 287 313.5 290.3 307.8 293.7 302.7 296.2 299.4M342.2 295.8 343.9 296.8M399.1 283 400.8 280.8 404.1 276.1 407.4 271.1 410.8 266 414.1 260.8"/><path class="z2p0d" d="M296.2 299.4 297 298.3 300.3 294.6 303.7 291.6 307 289.3 310.4 287.7 313.7 286.7 317.1 286.3 320.4 286.4 323.8 287 327.1 288 330.5 289.4 333.8 291 337.2 292.9 340.5 294.8 342.2 295.8M343.9 296.8 347.2 298.7 350.5 300.5 353.9 302.1 357.2 303.4 360.6 304.4 363.9 305 367.3 305.2"/><path class="z1p0d" d="M367.3 305.2 370.6 305 374 304.2 377.3 303 378.2 302.5M379 302.1 380.7 301.2 382.3 300.1M384 298.9 387.4 296.2M389.9 293.8 390.7 292.9 392.4 291.1M394.1 289.3 397.4 285.2 398.2 284.1"/><path class="z0p1" d="M257.4 404 258.3 402"/><path class="z1p1" d="M258.3 402 260.8 395.9 264.1 387.5 265.8 383.2M391.3 303 393.8 301.4M404.7 291.9 405.5 290.9M413.9 280.5 414.7 279.4 415.6 278.2"/><path class="z2p1" d="M265.8 383.2 267.5 378.9 270.8 370.3 274.2 361.8 277.5 353.4 280.9 345.2 284.2 337.3 287.5 329.8 290.9 322.8 294.2 316.4 297.6 310.5 300.9 305.2 304.3 300.5 307.6 296.6 308.5 295.7M415.6 278.2 418.1 274.7 421.4 269.8"/><path class="z2p1d" d="M308.5 295.7 311 293.3 314.3 290.6 317.7 288.7 321 287.4 324.4 286.6 327.7 286.5 331.1 286.8 334.4 287.6 337.7 288.8 341.1 290.3 344.4 292.1 347.8 294 351.1 296 354.5 298 357.8 299.9 361.2 301.7 364.5 303.3 367.9 304.7 371.2 305.7 374.6 306.4 375.4 306.4"/><path class="z1p1d" d="M375.4 306.4 377.9 306.6 381.3 306.4 384.6 305.8 388 304.6 391.3 303M393.8 301.4 394.6 300.9 398 298.3 401.3 295.3 404.7 291.9M405.5 290.9 408 288 411.4 283.9 413.9 280.5"/><path class="z0p2" d="M264.7 405.7 265.5 403.9"/><path class="z1p2" d="M265.5 403.9 268.1 398.2 271.4 390.4 274.7 382.5M410.3 298.6 411.1 297.9M412.8 296.4 414.5 294.9M416.2 293.2 418.7 290.6M420.3 288.7 421.2 287.8M427 280.5 428.7 278.3"/><path class="z2p2" d="M274.7 382.5 278.1 374.4 281.4 366.2 284.8 358.2 288.1 350.3 291.5 342.6 294.8 335.3 298.2 328.3 301.5 321.7 304.9 315.7 308.2 310.2 311.6 305.2 314.9 300.9 318.3 297.2 319.1 296.4M371 301.5 371.8 301.9"/><path class="z2p2d" d="M319.1 296.4 321.6 294.1 325 291.7 328.3 289.8 331.6 288.6 335 287.9 338.3 287.7 341.7 288 345 288.7 348.4 289.8 351.7 291.2 355.1 292.8 358.4 294.6 361.8 296.5 365.1 298.3 368.5 300.2 371 301.5M371.8 301.9 375.2 303.5 378.5 304.8 381.8 305.8 385.2 306.5"/><path class="z1p2d" d="M385.2 306.5 388.5 306.9 391.9 306.8 395.2 306.3 398.6 305.4 401.9 304 405.3 302.2 408.6 299.9 410.3 298.6M411.1 297.9 412 297.2 412.8 296.4M414.5 294.9 415.3 294.1 416.2 293.2M418.7 290.6 420.3 288.7M421.2 287.8 422 286.8 425.4 282.7 427 280.5"/><path class="z0p0" d="M272 407.4 272.8 405.8"/><path class="z1p0" d="M272.8 405.8 275.3 400.9 278.7 394 282 386.8 283.7 383.2M420.9 300 422.6 298.8M424.3 297.5 425.9 296.1 426.8 295.3M430.1 292.1 431.8 290.4M434.3 287.6 435.2 286.6"/><path class="z2p0" d="M283.7 383.2 285.4 379.5 288.7 372.1 292.1 364.6 295.4 357.1 298.8 349.8 302.1 342.7 305.5 335.8 308.8 329.3 312.2 323.1 315.5 317.4 318.8 312.1 322.2 307.4 325.5 303.2 328.9 299.5 330.6 298M365.7 292.9 369 294.4 370.7 295.2M375.7 297.7 376.6 298.1M384.1 301.7 384.9 302.1"/><path class="z2p0d" d="M330.6 298 332.2 296.4 335.6 293.9 338.9 291.9 342.3 290.5 345.6 289.6 349 289.2 352.3 289.2 355.7 289.6 359 290.4 362.4 291.5 365.7 292.9M370.7 295.2 372.4 296 375.7 297.7M376.6 298.1 379.1 299.4 382.4 301 384.1 301.7M384.9 302.1 385.8 302.5 389.1 303.8 392.5 304.9 395.8 305.7"/><path class="z1p0d" d="M395.8 305.7 399.2 306.2 402.5 306.4 405.9 306.2 409.2 305.5 412.6 304.5 415.9 303 419.3 301.1 420.9 300M422.6 298.8 424.3 297.5M426.8 295.3 429.3 293 430.1 292.1M431.8 290.4 432.6 289.5 434.3 287.6M435.2 286.6 436 285.7"/><path class="z0p1" d="M279.3 409.1 280.9 406.4"/><path class="z1p1" d="M280.9 406.4 282.6 403.8 286 398 289.3 391.9 292.7 385.5 293.5 383.9M431.6 301 433.2 300.1 434.9 298.9M435.7 298.3 436.6 297.7M438.2 296.3 439.9 294.9M440.8 294.1 443.3 291.7"/><path class="z2p1" d="M293.5 383.9 296 379 299.4 372.2 302.7 365.4 306 358.6 309.4 351.8 312.7 345.1 316.1 338.6 319.4 332.4 322.8 326.4 326.1 320.8 329.5 315.6 332.8 310.8 336.2 306.5 339.5 302.6 341.2 301M347 295.9 347.9 295.3M351.2 293.2 352.1 292.8M378.8 292.8 379.7 293.1 383 294.5 386.4 296M391.4 298.4 393.1 299.2M398.1 301.4 399.8 302.1"/><path class="z2p1d" d="M341.2 301 342.9 299.3 346.2 296.5 347 295.9M347.9 295.3 349.6 294.1 351.2 293.2M352.1 292.8 352.9 292.3 356.2 291 359.6 290.2 362.9 289.8 366.3 289.8 369.6 290.2 373 290.9 376.3 291.9 378.8 292.8M386.4 296 389.7 297.6 391.4 298.4M393.1 299.2 396.4 300.7 398.1 301.4M399.8 302.1 403.1 303.3 406.5 304.3 407.3 304.5"/><path class="z1p1d" d="M407.3 304.5 409.8 305 413.1 305.5 416.5 305.6 419.8 305.3 423.2 304.6 426.5 303.5 429.9 302 431.6 301M434.9 298.9 435.7 298.3M436.6 297.7 438.2 296.3M439.9 294.9 440.8 294.1"/><path class="z0p2" d="M286.6 410.8 289.9 406.8M445.5 299.8 446.4 299.2"/><path class="z1p2" d="M289.9 406.8 293.2 402.3 296.6 397.4 299.9 392.2 303.3 386.6 306.6 380.7"/><path class="z2p2" d="M306.6 380.7 310 374.6 313.3 368.4 316.7 362 320 355.6 323.4 349.2 326.7 342.9 330.1 336.7 333.4 330.7 336.8 325 340.1 319.6 343.4 314.6 346.8 309.9 350.1 305.7 351.8 303.8M357.7 297.9 358.5 297.2M395.3 293 397 293.7 400.3 295.2M402.9 296.4 403.7 296.8 406.2 298M410.4 299.9 413.7 301.3 415.4 301.9"/><path class="z2p2d" d="M351.8 303.8 353.5 301.9 356.8 298.6 357.7 297.9M358.5 297.2 360.2 295.8 363.5 293.5 366.9 291.7 370.2 290.3 373.6 289.5 376.9 289 380.3 289 383.6 289.4 387 290.1 390.3 291 393.7 292.3 395.3 293M400.3 295.2 402.9 296.4M406.2 298 407 298.3 410.4 299.9M415.4 301.9 417.1 302.5 418.8 303.1"/><path class="z1p2d" d="M418.8 303.1 420.4 303.6 423.8 304.3 427.1 304.7 430.5 304.8 433.8 304.5 437.2 303.7 440.5 302.5"/><path class="z0p2d" d="M440.5 302.5 443.9 300.8 445.5 299.8M446.4 299.2 447.2 298.7 450.6 296.1"/><path class="z0p0" d="M293.8 412.5 297.2 409.9 300.5 406.8 302.2 405M457 299.2 457.8 298.7"/><path class="z1p0" d="M302.2 405 303.9 403.2 307.2 399.1 310.6 394.6 313.9 389.7 317.3 384.3 320.6 378.7 321.4 377.2"/><path class="z2p0" d="M321.4 377.2 324 372.8 327.3 366.7 330.6 360.4 334 354 337.3 347.7 340.7 341.4 344 335.1 347.4 329.1 350.7 323.3 354.1 317.9 357.4 312.7 360.8 308 362.4 305.8M373.3 294.3 374.2 293.6M407.6 291 411 292.6M411.8 293 414.3 294.3M416 295.1 417.7 296 419.3 296.8M423.5 298.9 424.4 299.3 425.2 299.7"/><path class="z2p0d" d="M362.4 305.8 364.1 303.7 367.5 299.8 370.8 296.5 373.3 294.3M374.2 293.6 377.5 291.3 380.9 289.5 384.2 288.2 387.5 287.4 390.9 287.1 394.2 287.2 397.6 287.7 400.9 288.5 404.3 289.6 407.6 291M411 292.6 411.8 293M414.3 294.3 416 295.1M419.3 296.8 421 297.7 423.5 298.9M425.2 299.7 427.7 300.8 430.2 301.7"/><path class="z1p0d" d="M430.2 301.7 431.1 302.1 434.4 303.1 437.8 303.7 441.1 304 444.4 303.9 447.8 303.4 449.5 302.8"/><path class="z0p0d" d="M449.5 302.8 451.1 302.3 454.5 300.8 457 299.2"/><path class="z0p1" d="M301.1 414.2 304.5 413 307.8 411.3 311.2 409 314.5 406.1 317.9 402.6 321.2 398.6"/><path class="z1p1" d="M321.2 398.6 324.5 394 327.9 389 331.2 383.6 334.6 377.7 337.1 373.1M445 301.7 446.7 302"/><path class="z2p1" d="M337.1 373.1 337.9 371.6 341.3 365.2 344.6 358.6 348 352 351.3 345.3 354.7 338.7 358 332.2 361.4 326 364.7 319.9 368.1 314.3 371.4 309 373.1 306.6M378.9 298.9 380.6 297M382.3 295.2 383.1 294.4M384.8 292.8 385.6 292.1M399.9 285 400.7 284.9M419.9 289.4 421.6 290.3 423.3 291.2M425 292.1 426.6 293M429.1 294.4 430.8 295.3M433.3 296.6 435 297.5M435.8 297.9 438.3 299.1 439.2 299.5"/><path class="z2p1d" d="M373.1 306.6 374.7 304.2 378.1 299.8 378.9 298.9M380.6 297 381.4 296 382.3 295.2M383.1 294.4 384.8 292.8M385.6 292.1 388.1 290.1 391.5 287.9 394.8 286.3 398.2 285.3 399.9 285M400.7 284.9 401.5 284.8 404.9 284.8 408.2 285.2 411.6 286 414.9 287.2 418.3 288.6 419.9 289.4M423.3 291.2 425 292.1M426.6 293 428.3 293.9 429.1 294.4M430.8 295.3 431.6 295.8 433.3 296.6M435 297.5 435.8 297.9M439.2 299.5 441.7 300.5"/><path class="z1p1d" d="M441.7 300.5 445 301.7M446.7 302 448.4 302.4 451.7 302.8 455.1 302.7 458.4 302.2 461.8 301.1"/><path class="z0p1d" d="M461.8 301.1 465.1 299.5"/><path class="z0p2" d="M308.4 415.9 311.7 416.1 315.1 415.6 318.4 414.5 321.8 412.7 325.1 410.2 328.5 407 331.8 403.2 335.2 398.7 338.5 393.7"/><path class="z1p2" d="M338.5 393.7 341.9 388.1 345.2 382.1 348.6 375.7 351.1 370.7"/><path class="z2p2" d="M351.1 370.7 351.9 369 355.3 362 358.6 355 361.9 347.8 365.3 340.7 368.6 333.7 372 327 375.3 320.5 378.7 314.4 382 308.7 382.9 307.4M386.2 302.3 388.7 298.8M390.4 296.8 391.2 295.8M396.3 290.5 397.9 289M424.7 285 425.5 285.3 427.2 286.1M439.8 292.8 442.3 294.2 445.6 295.9"/><path class="z2p2d" d="M382.9 307.4 385.4 303.5 386.2 302.3M388.7 298.8 390.4 296.8M391.2 295.8 392.1 294.7 395.4 291.2 396.3 290.5M397.9 289 398.8 288.3 402.1 286 405.5 284.4 408.8 283.3 412.2 282.8 415.5 282.8 418.8 283.2 422.2 284.1 424.7 285M427.2 286.1 428.9 286.8 432.2 288.6 435.6 290.4 438.9 292.3 439.8 292.8M445.6 295.9 449 297.5 452.3 298.8 454 299.3"/><path class="z1p2d" d="M454 299.3 455.7 299.8 459 300.5 462.4 300.7 465.7 300.5 469.1 299.7 472.4 298.5"/><path class="z0p0d" d="M315.7 417.6 316.5 417.9M318.2 418.6 319 419M319.9 419.1 322.4 419.6 325.7 419.5"/><path class="z0p0" d="M316.5 417.9 318.2 418.6M319 419 319.9 419.1M325.7 419.5 329.1 418.7 332.4 417 335.8 414.6 339.1 411.3 342.5 407.4 345.8 402.7 349.1 397.3 352.5 391.4 353.3 389.8"/><path class="z1p0" d="M353.3 389.8 355.8 384.9 359.2 378.1 362.5 370.9 363.4 369M466.3 297.3 467.1 297.3M478 296.4 479.7 295.8"/><path class="z2p0" d="M363.4 369 365.9 363.5 369.2 355.9 372.6 348.3 375.9 340.8 379.3 333.4 382.6 326.3 386 319.5 389.3 313.2 392.7 307.3M394.3 304.6 395.2 303.3M397.7 299.6 398.5 298.4M403.5 292.2 404.4 291.4M419.4 282 420.3 281.9M439.5 285.9 441.2 286.8M442 287.2 442.9 287.6M446.2 289.3 449.6 291.1 452.9 292.7M457.1 294.6 459.6 295.6 462.9 296.6 466.3 297.3"/><path class="z2p0d" d="M392.7 307.3 394.3 304.6M395.2 303.3 396 302 397.7 299.6M398.5 298.4 399.4 297.2 402.7 293.1 403.5 292.2M404.4 291.4 406 289.6 409.4 286.8 412.7 284.6 416.1 283 419.4 282M420.3 281.9 422.8 281.6 426.1 281.7 429.5 282.3 432.8 283.2 436.2 284.4 439.5 285.9M441.2 286.8 442 287.2M442.9 287.6 446.2 289.3M452.9 292.7 456.3 294.3 457.1 294.6"/><path class="z1p0d" d="M467.1 297.3 469.6 297.6 473 297.5 476.3 296.9 478 296.4"/><path class="z0p1d" d="M323 419.3 326.3 421.6 327.1 422M328 422.4 329.7 423.1 333 423.9 336.3 423.7 338.9 423"/><path class="z0p1" d="M327.1 422 328 422.4M338.9 423 339.7 422.7 343 420.8 346.4 418 349.7 414.4 353.1 409.9 356.4 404.7 359.8 398.8 363.1 392.4 364.8 388.9"/><path class="z1p1" d="M364.8 388.9 366.5 385.4 369.8 378 373.2 370.4 374 368.4M485.3 292.3 487 291.8"/><path class="z2p1" d="M374 368.4 376.5 362.5 379.9 354.6 383.2 346.7 386.6 338.9 389.9 331.4 393.2 324.2 396.6 317.5 399.9 311.2 401.6 308.3M408.3 298 409.1 296.9M410 295.8 412.5 292.9M414.2 291.1 415.8 289.5M419.2 286.7 420 286.1M433.4 281.8 435.9 281.9M456.8 288.6 457.7 289M467.7 292.4 470.2 292.9 473.6 293.4 475.2 293.5"/><path class="z2p1d" d="M401.6 308.3 403.3 305.4 406.6 300.3 408.3 298M409.1 296.9 410 295.8M412.5 292.9 413.3 291.9 414.2 291.1M415.8 289.5 416.7 288.7 419.2 286.7M420 286.1 423.4 284.2 426.7 282.8 430.1 282.1 433.4 281.8M435.9 281.9 436.8 282 440.1 282.6 443.5 283.4 446.8 284.6 450.1 285.9 453.5 287.2 456.8 288.6M457.7 289 460.2 289.9 463.5 291.2 466.9 292.2 467.7 292.4M475.2 293.5 476.9 293.6 480.3 293.4 481.9 293.1"/><path class="z1p1d" d="M481.9 293.1 483.6 292.8 485.3 292.3"/><path class="z0p2d" d="M330.2 421 333.6 423.9 336.9 426.1M337.8 426.4 339.4 427M340.3 427.4 343.6 427.7 347 427.1 349.5 425.9"/><path class="z0p2" d="M336.9 426.1 337.8 426.4M339.4 427 340.3 427.4M349.5 425.9 350.3 425.5 353.7 422.9 357 419.4 360.4 415.1 363.7 409.9 367.1 404.1 370.4 397.5 373.8 390.5 374.6 388.6"/><path class="z1p2" d="M374.6 388.6 377.1 383 380.4 375.2 383 369.2"/><path class="z2p2" d="M383 369.2 383.8 367.2 387.1 359.2 390.5 351.1 393.8 343.2 397.2 335.6 400.5 328.3 403.9 321.4 407.2 315 410.6 309.2 412.2 306.5M417.3 299.3 418.9 297.3M419.8 296.3 420.6 295.3 423.1 292.7M424.8 291.2 425.6 290.5M427.3 289.1 429 288.1M432.3 286.2 433.2 285.8"/><path class="z2p2d" d="M412.2 306.5 413.9 303.9 417.3 299.3M418.9 297.3 419.8 296.3M423.1 292.7 424 291.9 424.8 291.2M425.6 290.5 427.3 289.1M429 288.1 430.7 287 432.3 286.2M433.2 285.8 434 285.4 437.3 284.4 440.7 283.8 444 283.6 447.4 283.7 450.7 284.1 454.1 284.7 457.4 285.5 460.8 286.3 464.1 287.1 467.5 287.8 470.8 288.5 474.2 288.9 477.5 289.2 480.9 289.2 484.2 289 487.5 288.5 490.9 287.8 494.2 286.8"/><path class="z0p0d" d="M337.5 422.7 340 425.1M340.9 426 344.2 428.4 347.6 429.9 350.9 430.4 354.3 429.8 357.6 428.3 359.3 427"/><path class="z0p0" d="M340 425.1 340.9 426M359.3 427 361 425.8 364.3 422.3 367.6 417.9 371 412.7 374.3 406.8 377.7 400.2 381 393.1 382.7 389.3"/><path class="z1p0" d="M382.7 389.3 384.4 385.6 387.7 377.8 391.1 369.8"/><path class="z2p0" d="M391.1 369.8 394.4 361.8 397.8 353.9 401.1 346.2 404.5 338.7 407.8 331.6 411.2 324.9 414.5 318.7 417.9 313.1 421.2 308.1 422.9 305.8M427.9 299.7 431.2 296.5M432.9 295.1 434.6 293.8 436.3 292.7M437.9 291.6 441.3 289.9M442.1 289.6 443 289.2M444.6 288.6 448 287.7 451.3 287.1M500.7 281.4 501.5 281.1"/><path class="z2p0d" d="M422.9 305.8 424.5 303.6 427.9 299.7M431.2 296.5 432.9 295.1M436.3 292.7 437.9 291.6M441.3 289.9 442.1 289.6M443 289.2 444.6 288.6M451.3 287.1 454.7 286.8 458 286.7 461.4 286.6 464.7 286.7 468.1 286.7 471.4 286.7 474.8 286.6 478.1 286.5 481.4 286.1 484.8 285.7 488.1 285 491.5 284.3 494.8 283.3 498.2 282.3 500.7 281.4"/><path class="z0p1" d="M344.8 424.3 346.5 426M354 431 354.8 431.3M366.6 427.9 368.2 426.5 371.6 422.8 374.9 418.2 378.3 412.8 381.6 406.8 385 400.1 388.3 393"/><path class="z0p1d" d="M346.5 426 348.2 427.6 351.5 430 354 431M354.8 431.3 358.2 431.7 361.5 431 364.9 429.2 366.6 427.9"/><path class="z1p1" d="M388.3 393 391.7 385.6 395 377.9 397.5 372.1"/><path class="z2p1" d="M397.5 372.1 398.4 370.2 401.7 362.5 405.1 354.9 408.4 347.6 411.7 340.6 415.1 334 418.4 327.9 421.8 322.3 425.1 317.2 428.5 312.7 431.8 308.8 434.3 306.2M443.5 298.9 444.4 298.4M449.4 295.9 451.1 295.2M451.9 294.9 454.4 294M456.9 293.2 458.6 292.8 462 291.9M466.1 290.9 467 290.7M495.4 281.1 496.3 280.7"/><path class="z2p1d" d="M434.3 306.2 435.2 305.3 438.5 302.4 441.9 300 443.5 298.9M444.4 298.4 445.2 297.9 448.6 296.2 449.4 295.9M451.1 295.2 451.9 294.9M454.4 294 455.3 293.7 456.9 293.2M462 291.9 465.3 291.1 466.1 290.9M467 290.7 468.6 290.3 472 289.5 475.3 288.6 478.7 287.6 482 286.5 485.4 285.3 488.7 284 492.1 282.6 495.4 281.1M496.3 280.7 498.8 279.6 502.1 278.1 505.5 276.6 508.8 275.1"/><path class="z0p2" d="M352.1 426 352.9 426.8M371.3 428.8 372.2 428.2 375.5 425.1 378.9 420.9 382.2 416 385.6 410.4 388.9 404.1 392.3 397.4 393.1 395.6"/><path class="z0p2d" d="M352.9 426.8 355.4 428.9 358.8 430.9 362.1 431.8 365.5 431.7 368.8 430.5 371.3 428.8"/><path class="z1p2" d="M393.1 395.6 395.6 390.3 398.9 383 402.3 375.6"/><path class="z2p2" d="M402.3 375.6 405.6 368.2 409 361 412.3 354.1 415.7 347.5 419 341.3 422.4 335.5 425.7 330.3 429.1 325.6 432.4 321.5 435.8 317.8 439.1 314.7 442.5 312 445.8 309.6 449.2 307.6 452.5 305.9 455.8 304.4 459.2 303M509.4 273.2 510.2 272.7"/><path class="z2p2d" d="M459.2 303 462.5 301.6 465.9 300.3 469.2 298.9 472.6 297.4 475.9 295.7 479.3 293.9 482.6 291.9 486 289.8 489.3 287.5 492.7 285.2 496 282.7 499.4 280.2 502.7 277.8 506 275.4 509.4 273.2M510.2 272.7 512.7 271.2 516.1 269.4"/><path class="z0p0d" d="M359.4 427.7 362.7 429.9 366.1 431.1 369.4 431.3 372.8 430.3 376.1 428.4 378.6 426.2"/><path class="z0p0" d="M378.6 426.2 379.5 425.4 382.8 421.6 386.1 416.9 389.5 411.4 392.8 405.4 394.5 402.2"/><path class="z1p0" d="M394.5 402.2 396.2 398.9 399.5 392.1 402.9 385.1 405.4 379.8"/><path class="z2p0" d="M405.4 379.8 406.2 378 409.6 371 412.9 364.2 416.3 357.7 419.6 351.6 423 346 426.3 340.9 429.7 336.3 433 332.3 436.4 328.8 439.7 325.8 443 323.4 446.4 321.3 449.7 319.5 453.1 318 456.4 316.6 459.8 315.4 463.1 314.1 466.5 312.7 469.8 311.2 473.2 309.5 476.5 307.5 479.9 305.2 483.2 302.6 486.6 299.8 489.9 296.6 493.2 293.3 496.6 289.7 499.9 286 503.3 282.3 506.6 278.7 507.5 277.8"/><path class="z2p0d" d="M507.5 277.8 510 275.2 513.3 271.9 516.7 269 520 266.4 523.4 264.4"/><path class="z0p1d" d="M366.7 429.4 370 430.6 373.3 430.8 376.7 429.9 380 427.9 380.9 427.2"/><path class="z0p1" d="M380.9 427.2 383.4 425 386.7 421.1 390.1 416.3 393.4 410.9 395.1 407.8"/><path class="z1p1" d="M395.1 407.8 396.8 404.8 400.1 398.3 403.5 391.5 406 386.3"/><path class="z2p1" d="M406 386.3 406.8 384.6 410.2 377.7 413.5 370.9 416.9 364.4 420.2 358.4 423.6 352.8 426.9 347.7 430.2 343.3 433.6 339.5 436.9 336.4 440.3 333.8 443.6 331.8 447 330.3 450.3 329.2 453.7 328.4 457 327.8 460.4 327.2 463.7 326.7 467.1 326 470.4 325 473.8 323.8 477.1 322.1 480.4 320 483.8 317.4 487.1 314.3 490.5 310.8 493.8 306.8 497.2 302.4 500.5 297.8 503.9 292.9 507.2 287.9 510.6 283 513.9 278.2 517.3 273.6 520.6 269.5 524 265.8 524.8 265M527.3 262.7 530.7 260.4"/><path class="z2p1d" d="M524.8 265 527.3 262.7"/><path class="z0p2d" d="M373.9 431.1 377.3 431.1 378.1 430.8"/><path class="z0p2" d="M378.1 430.8 380.6 430 384 427.8 387.3 424.6 390.7 420.4 394 415.4"/><path class="z1p2" d="M394 415.4 397.4 409.6 400.7 403.3 404.1 396.5 405.7 393"/><path class="z2p2" d="M405.7 393 407.4 389.5 410.8 382.4 414.1 375.3 417.4 368.5 420.8 362.2M424.1 356.3 425 355M427.5 351.1 428.3 349.9M459.3 335.6 461 335.9M461.8 336.1 464.3 336.6 467.7 337.1 471 337.5 474.3 337.4 477.7 336.8 481 335.7 484.4 333.9 487.7 331.4 491.1 328.2 494.4 324.3 497.8 319.8 501.1 314.7 504.5 309.1 507.8 303.1 511.2 297 514.5 290.7 517.9 284.6 521.2 278.6 524.5 273.1 527.9 268.2 531.2 263.9 534.6 260.4 537.9 257.7"/><path class="z2p2d" d="M420.8 362.2 424.1 356.3M425 355 427.5 351.1M428.3 349.9 430.8 346.5 434.2 342.7 437.5 339.7 440.9 337.5 444.2 335.9 447.6 335.1 450.9 334.7 454.3 334.9 457.6 335.3 459.3 335.6M461 335.9 461.8 336.1"/><path class="z0p0" d="M381.2 432.8 384.6 431.4 387.9 428.8 391.3 425.2 392.9 422.9"/><path class="z1p0" d="M392.9 422.9 394.6 420.6 398 415.1 401.3 408.8 404.6 401.9 405.5 400.1M480 348.8 481.6 349.1 485 348.9 488.3 347.9 491.7 346 495 343.1 498.4 339.3 501.7 334.6 502.5 333.2"/><path class="z2p0" d="M405.5 400.1 408 394.6 411.3 387 414.7 379.4 416.4 375.7M418 372 418.9 370.2M419.7 368.4 420.5 366.6M456.5 336.9 457.4 337.2M462.4 340 463.2 340.5M474.1 347 474.9 347.4 478.3 348.6 480 348.8M502.5 333.2 505.1 329.1 508.4 322.9 511.7 316.1 515.1 309 518.4 301.6 521.8 294.3 525.1 287 528.5 280.2 531.8 273.8 535.2 268.2 538.5 263.4 541.9 259.5 545.2 256.7"/><path class="z2p0d" d="M416.4 375.7 418 372M418.9 370.2 419.7 368.4M420.5 366.6 421.4 364.9 424.7 358.2 428.1 352.3 431.4 347.1 434.8 342.8 438.1 339.5 441.5 337 444.8 335.6 448.2 335 451.5 335.2 454.9 336.1 456.5 336.9M457.4 337.2 458.2 337.6 461.5 339.5 462.4 340M463.2 340.5 464.9 341.6 468.2 343.7 471.6 345.7 474.1 347"/><path class="z0p1" d="M388.5 434.5 391.8 431.6 393.5 429.6M492.3 360.9 495.6 359.9 498.9 357.8 502.3 354.5 503.1 353.4"/><path class="z1p1" d="M393.5 429.6 395.2 427.5 398.5 422.4 401.9 416.3 405.2 409.4 406.9 405.6M479.7 355.5 482.2 357.6 485.6 359.6 488.9 360.8 492.3 360.9M503.1 353.4 505.6 350.1 509 344.6 512.3 338.2 515.7 331"/><path class="z2p1" d="M406.9 405.6 408.6 401.8 411.9 393.7 415.3 385.3 418.6 377 422 368.8 424.5 362.9M425.3 361 427.8 355.6M442.1 334.2 442.9 333.7M443.7 333.1 445.4 332.1 446.2 331.8M447.9 331.3 448.7 331.1 452.1 331.2 455.4 332.4 456.3 332.9M457.1 333.4 457.9 333.9M458.8 334.4 460.5 335.8M463 338 463.8 338.8M470.5 346 471.3 346.9M472.2 347.9 475.5 351.5 478.9 354.8 479.7 355.5M515.7 331 519 323.2 522.4 315 525.7 306.7 529.1 298.3 532.4 290.2 535.8 282.6 539.1 275.7 542.5 269.6 545.8 264.5 549.2 260.4 552.5 257.5"/><path class="z2p1d" d="M424.5 362.9 425.3 361M427.8 355.6 428.7 353.8 432 347.4 435.4 341.9 438.7 337.5 442.1 334.2M442.9 333.7 443.7 333.1M446.2 331.8 447.9 331.3M456.3 332.9 457.1 333.4M457.9 333.9 458.8 334.4M460.5 335.8 462.1 337.2 463 338M463.8 338.8 465.5 340.5 468.8 344.1 470.5 346M471.3 346.9 472.2 347.9"/></g>
<path d="M104.5 415.9L388.5 481.9M104.5 257.9L220 284.7M225.8 286.1L243.8 290.3M247.2 291.1L263.8 294.9M266.2 295.5L269.6 296.3M273 297.1L281.3 299M292 301.5L292.5 301.6M295.5 302.3L309.6 305.6M312 306.1L332 310.8M333.5 311.1L342.7 313.3M344.2 313.6L354.4 316M355.4 316.2L374.9 320.7M376.3 321.1L388.5 323.9M268.5 302.1L552.5 368.1M268.5 144.1L552.5 210.1M104.5 415.9L268.5 302.1M104.5 257.9L268.5 144.1M388.5 481.9L552.5 368.1M388.5 323.9L395.9 318.8M398.4 317.1L408.6 309.9M411.1 308.2L412.8 307.1M446.9 283.4L552.5 210.1" fill="none" stroke="url(#pb)" stroke-width="1.0" shape-rendering="crispEdges"/>
<path d="M175.5 432.4L180.6 428.9M175.5 432.4L175.5 426.1M246.5 448.9L251.6 445.4M246.5 448.9L246.5 442.6M317.5 465.4L322.6 461.9M317.5 465.4L317.5 459.1M175.5 274.4L180.6 270.9M175.5 274.4L175.5 280.7M247 290.5L251.6 287.4M246.5 292.1L246.5 297.2M317.5 307.4L322.6 303.9M317.5 307.4L317.5 313.7M339.5 318.6L334.4 322.1M339.5 318.6L339.5 312.3M410.5 335.1L405.4 338.6M410.5 335.1L410.5 328.8M481.5 351.6L476.4 355.1M481.5 351.6L481.5 345.3M339.5 160.6L334.4 164.1M339.5 160.6L339.5 166.9M410.5 177.1L405.4 180.6M410.5 177.1L410.5 183.4M481.5 193.6L476.4 197.1M481.5 193.6L481.5 199.9M145.5 387.4L154.7 389.6M145.5 387.4L145.5 381.1M186.5 359L195.7 361.1M186.5 359L186.5 352.7M227.5 330.6L236.7 332.7M227.5 330.6L227.5 324.2M145.5 229.4L154.7 231.6M145.5 229.4L145.5 235.8M186.5 201L195.7 203.1M186.5 201L186.5 207.3M227.5 172.6L236.7 174.7M227.5 172.6L227.5 178.9M429.5 453.4L420.3 451.3M429.5 453.4L429.5 447.1M470.5 425L461.3 422.9M470.5 425L470.5 418.7M511.5 396.6L502.3 394.4M511.5 396.6L511.5 390.2M424.7 294.3L424.1 294.2M470.5 267L461.3 264.9M470.5 267L470.5 273.3M511.5 238.6L502.3 236.4M511.5 238.6L511.5 244.9M104.5 376.4L113.7 378.5M104.5 376.4L109.6 372.9M104.5 336.9L113.7 339M104.5 336.9L109.6 333.4M104.5 297.4L113.7 299.5M104.5 297.4L109.6 293.9M268.5 262.6L277.7 264.7M268.5 262.6L263.4 266.1M268.5 223.1L277.7 225.2M268.5 223.1L263.4 226.6M268.5 183.6L277.7 185.7M268.5 183.6L263.4 187.1M388.5 442.4L379.3 440.3M388.5 442.4L393.6 438.9M388.5 402.9L384.6 402M382.8 401.6L379.3 400.8M388.5 402.9L388.8 402.7M391.3 401L393.6 399.4M388.5 363.4L379.3 361.3M388.5 363.4L392.8 360.4M552.5 328.6L543.3 326.5M552.5 328.6L547.4 332.1M552.5 289.1L543.3 287M552.5 289.1L547.4 292.6M552.5 249.6L543.3 247.5M552.5 249.6L547.4 253.1" fill="none" stroke="#3a3a3a" stroke-width="0.9"/>
<g fill="none" style="mix-blend-mode:multiply"><path d="M103.5 257.9V415.9" stroke="#fffbd0" stroke-width="1"/><path d="M104.5 257.9V415.9" stroke="#b9b9ea" stroke-width="1"/><path d="M268.5 144.1V302.1" stroke="#111" stroke-width="1"/><path d="M388.5 429.4V481.9" stroke="#111" stroke-width="1"/><path d="M388.5 415.4V415.9" stroke="#111" stroke-width="1"/><path d="M388.5 406.4V410.9" stroke="#111" stroke-width="1"/><path d="M388.5 395.4V402.9" stroke="#111" stroke-width="1"/><path d="M388.5 379.4V391.9" stroke="#111" stroke-width="1"/><path d="M388.5 361.4V375.9" stroke="#111" stroke-width="1"/><path d="M388.5 332.4V357.9" stroke="#111" stroke-width="1"/><path d="M388.5 323.9V330.9" stroke="#111" stroke-width="1"/><path d="M552.5 210.1V368.1" stroke="#aaa6aa" stroke-width="1"/><path d="M553.5 210.1V368.1" stroke="#ffe4e4" stroke-width="1"/></g>
<path d="M8 112.5H14" stroke="#000" stroke-width="1"/>
</svg>
</body></html>
